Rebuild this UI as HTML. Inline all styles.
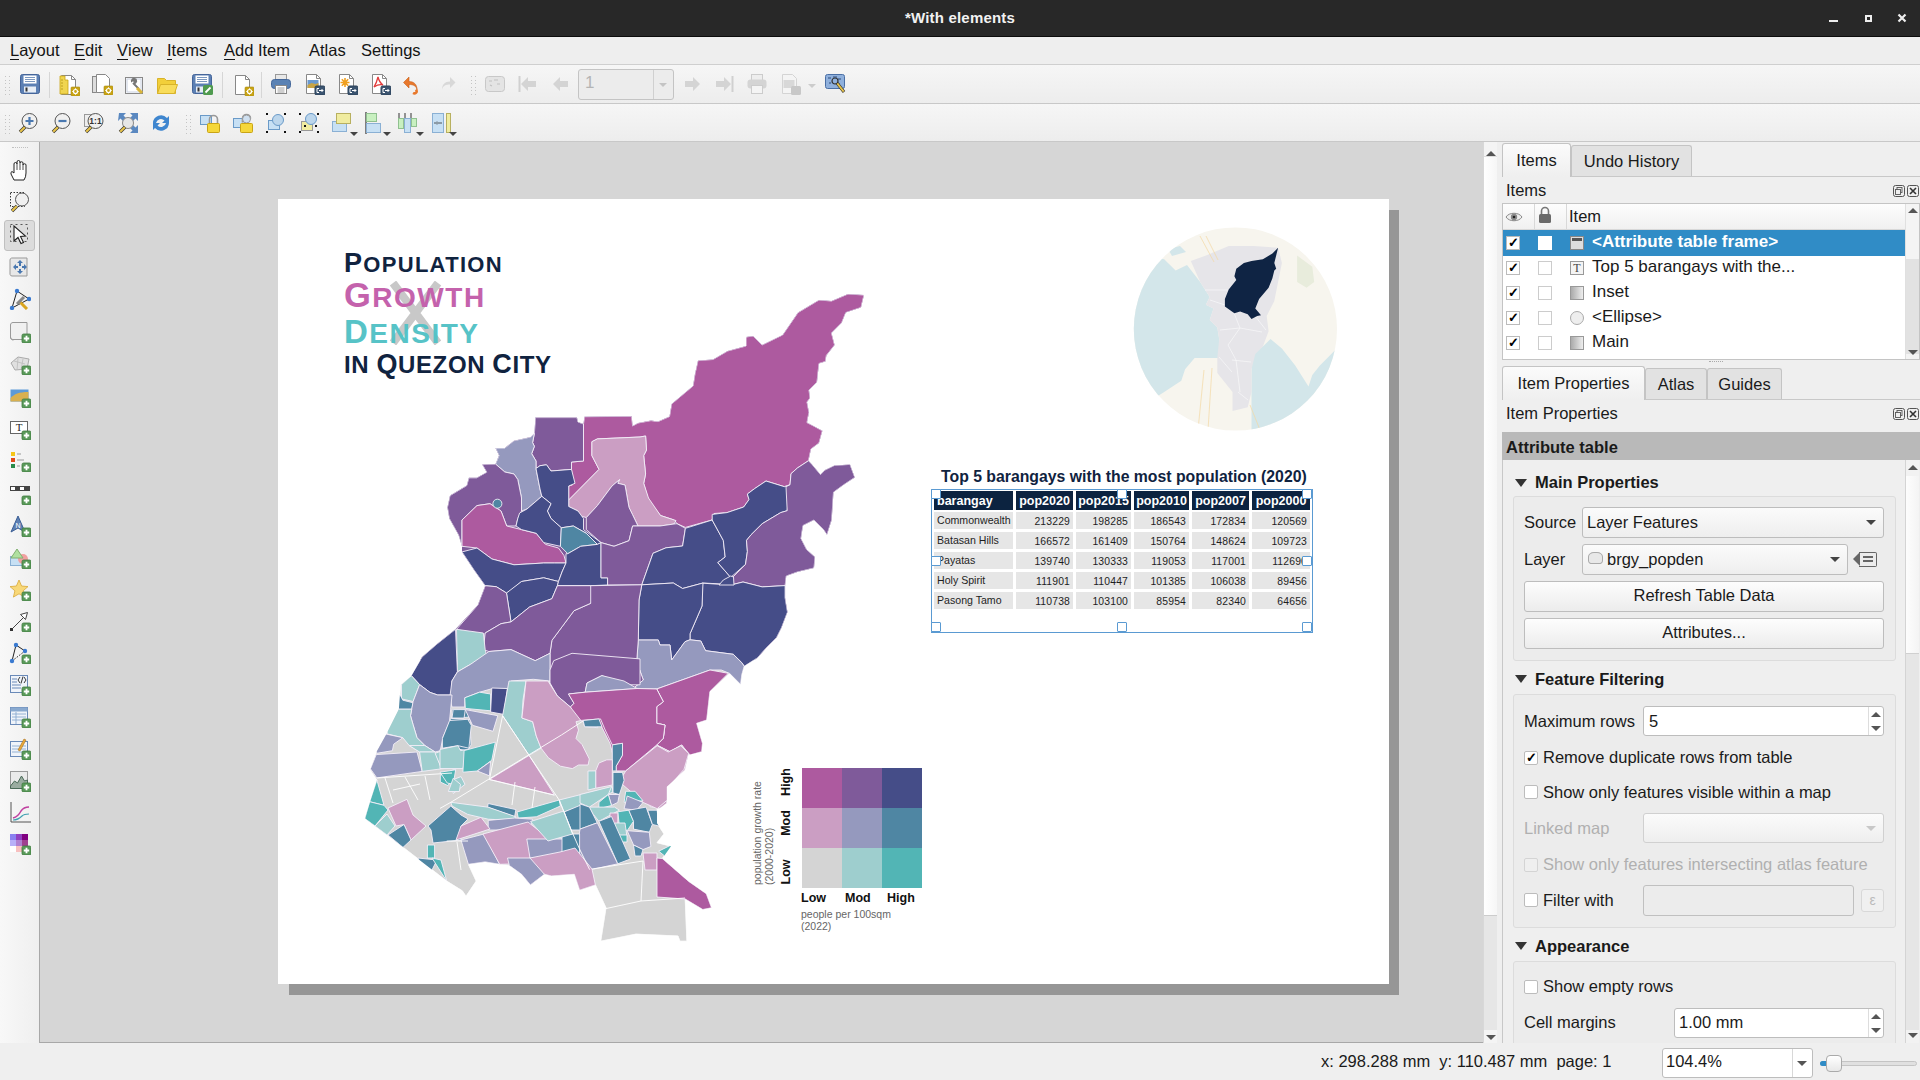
<!DOCTYPE html>
<html><head><meta charset="utf-8">
<style>
*{box-sizing:border-box;margin:0;padding:0}
html,body{width:1920px;height:1080px;overflow:hidden;background:#efefef;font-family:"Liberation Sans",sans-serif;color:#1a1a1a}
.a{position:absolute}
#title{left:0;top:0;width:1920px;height:37px;background:#282828;border-bottom:1px solid #0c0c0c}
#title .t{left:0;width:1920px;top:9px;text-align:center;color:#f2f2f2;font-weight:bold;font-size:15px;letter-spacing:0.2px}
#menu{left:0;top:37px;width:1920px;height:28px;background:#eeeeee;border-bottom:1px solid #cfcfcf}
.mi{top:4px;font-size:16.5px;color:#141414}
.mi u{text-decoration:none;border-bottom:1px solid #141414;display:inline-block;line-height:17px}
#tb1{left:0;top:65px;width:1920px;height:39px;background:linear-gradient(#f6f6f6,#ededed);border-bottom:1px solid #c8c8c8}
#tb2{left:0;top:104px;width:1920px;height:38px;background:linear-gradient(#f6f6f6,#ededed);border-bottom:1px solid #c8c8c8}
#ltb{left:0;top:142px;width:39px;height:901px;background:linear-gradient(90deg,#f8f8f8,#efefef)}
#canvas{left:39px;top:142px;width:1444px;height:901px;background:#d6d6d6;border-left:1px solid #a8a8a8;border-bottom:1px solid #a8a8a8}
#vscroll{left:1483px;top:142px;width:14px;height:901px;background:#f4f4f4;border-left:1px solid #d8d8d8}
#status{left:0;top:1043px;width:1920px;height:37px;background:#efefef}
.st{font-size:16.5px;color:#1a1a1a}
.panel-t{font-size:16.5px;color:#1a1a1a}
.tab{border:1px solid #c4c4c4;border-bottom:none;border-radius:3px 3px 0 0;background:#e2e2e2;font-size:16.5px;text-align:center}
.tab.on{background:linear-gradient(#fbfbfb,#efefef)}
.combo{background:linear-gradient(#fbfbfb,#eeeeee);border:1px solid #bdbdbd;border-radius:3px}
.btn{background:linear-gradient(#fdfdfd,#ececec);border:1px solid #bdbdbd;border-radius:3px;text-align:center;font-size:16.5px}
.inp{background:#fff;border:1px solid #bdbdbd;border-radius:3px}
.chk{width:14px;height:14px;background:#fff;border:1px solid #bcbcbc;border-radius:2px}
.grp{border:1px solid #dcdcdc;border-radius:3px;background:#ececec}
.gh{font-size:16.5px;font-weight:bold;padding-top:2px}
.tri{width:0;height:0;border-left:6px solid transparent;border-right:6px solid transparent;border-top:8px solid #333}
.lbl{font-size:16.5px;padding-top:2px}
</style></head><body>
<div id="title" class="a"><div class="t a">*With elements</div>
 <div class="a" style="left:1829px;top:20px;width:9px;height:2px;background:#eee"></div>
 <div class="a" style="left:1865px;top:15px;width:6.5px;height:6.5px;border:2.2px solid #eee"></div>
 <svg class="a" style="left:1897px;top:13px" width="10" height="10" viewBox="0 0 10 10"><path d="M1.5 1.5L8.5 8.5M8.5 1.5L1.5 8.5" stroke="#eee" stroke-width="2.2"/></svg>
</div>
<div id="menu" class="a">
 <div class="mi a" style="left:10px"><u>L</u>ayout</div>
 <div class="mi a" style="left:74px"><u>E</u>dit</div>
 <div class="mi a" style="left:117px"><u>V</u>iew</div>
 <div class="mi a" style="left:167px"><u>I</u>tems</div>
 <div class="mi a" style="left:224px"><u>A</u>dd Item</div>
 <div class="mi a" style="left:309px">Atlas</div>
 <div class="mi a" style="left:361px">Settings</div>
</div>
<div id="tb1" class="a"></div>
<div id="tb2" class="a"></div>
<div id="ltb" class="a"></div>
<!--ICONS-->
<div class="a" style="left:5px;top:76.0px;width:1px;height:1px;background:#c4c4c4"></div><div class="a" style="left:8.5px;top:76.0px;width:1px;height:1px;background:#c4c4c4"></div><div class="a" style="left:5px;top:79.5px;width:1px;height:1px;background:#c4c4c4"></div><div class="a" style="left:8.5px;top:79.5px;width:1px;height:1px;background:#c4c4c4"></div><div class="a" style="left:5px;top:83.0px;width:1px;height:1px;background:#c4c4c4"></div><div class="a" style="left:8.5px;top:83.0px;width:1px;height:1px;background:#c4c4c4"></div><div class="a" style="left:5px;top:86.5px;width:1px;height:1px;background:#c4c4c4"></div><div class="a" style="left:8.5px;top:86.5px;width:1px;height:1px;background:#c4c4c4"></div><div class="a" style="left:5px;top:90.0px;width:1px;height:1px;background:#c4c4c4"></div><div class="a" style="left:8.5px;top:90.0px;width:1px;height:1px;background:#c4c4c4"></div><div class="a" style="left:5px;top:93.5px;width:1px;height:1px;background:#c4c4c4"></div><div class="a" style="left:8.5px;top:93.5px;width:1px;height:1px;background:#c4c4c4"></div>
<svg class="a" style="left:19px;top:73px" width="22" height="22" viewBox="0 0 22 22"><rect x="1.5" y="1.5" width="19" height="19" rx="2" fill="#5c80b4" stroke="#45659a"/><rect x="4.5" y="2.5" width="13" height="8" fill="#fff"/><path d="M6 4.5h10M6 6.5h10M6 8.5h10" stroke="#6d8cb8" stroke-width="0.9"/><rect x="5" y="13.5" width="12" height="6" fill="#e8eef6"/><rect x="6.5" y="14.5" width="2" height="4" fill="#333"/></svg>
<svg class="a" style="left:58px;top:74px" width="22" height="22" viewBox="0 0 22 22"><path d="M3.5 1.5h10l4 4v15h-14z" fill="#fff" stroke="#888" stroke-width="1"/><path d="M13.5 1.5v4h4" fill="none" stroke="#888" stroke-width="1"/><path d="M2 2h5v4h3v14H2z" fill="#f0d550" stroke="#c9a415" stroke-width="0.8"/><path d="M3 6h2M3 9h2M3 12h2M3 15h2" stroke="#a88a10" stroke-width="0.7"/><rect x="13" y="13" width="9" height="9" rx="1" fill="#c9a415" stroke="#a88a10" stroke-width="0.6"/><circle cx="17.5" cy="17.5" r="2" fill="none" stroke="#fff" stroke-width="1.2"/><path d="M17.5 14.3v1.2M17.5 19.5v1.2M14.3 17.5h1.2M19.5 17.5h1.2" stroke="#fff" stroke-width="1"/></svg>
<svg class="a" style="left:91px;top:73px" width="22" height="22" viewBox="0 0 22 22"><rect x="1.5" y="3.5" width="14" height="16" fill="#ddd" stroke="#888"/><path d="M5.5 1.5h9l4 4v14h-13z" fill="#fff" stroke="#888"/><rect x="13" y="13" width="9" height="9" rx="1" fill="#c9a415" stroke="#a88a10" stroke-width="0.6"/><circle cx="17.5" cy="17.5" r="2" fill="none" stroke="#fff" stroke-width="1.2"/><path d="M17.5 14.3v1.2M17.5 19.5v1.2M14.3 17.5h1.2M19.5 17.5h1.2" stroke="#fff" stroke-width="1"/></svg>
<svg class="a" style="left:124px;top:74px" width="22" height="22" viewBox="0 0 22 22"><rect x="1.5" y="3.5" width="17" height="16" fill="#fff" stroke="#888"/><rect x="3" y="5" width="14" height="13" fill="none" stroke="#c8d0e0"/><path d="M8 8c-1-2 1-4 3-3l-1.5 1.5 1 1 1.5-1.5c1 2-1 4-3 3l6 6" stroke="#777" stroke-width="1.8" fill="none"/><path d="M13 14l5 5" stroke="#d9b53a" stroke-width="3"/></svg>
<svg class="a" style="left:156px;top:74px" width="22" height="22" viewBox="0 0 22 22"><path d="M1.5 4.5h7l2 2h9v13h-18z" fill="#f2cf3a" stroke="#d8b32a"/><path d="M1.5 19.5l3-9h17l-3 9z" fill="#f8dc5a" stroke="#d8b32a"/></svg>
<svg class="a" style="left:191px;top:73px" width="22" height="22" viewBox="0 0 22 22"><rect x="1.5" y="1.5" width="19" height="19" rx="2" fill="#5c80b4" stroke="#45659a"/><rect x="4.5" y="2.5" width="13" height="8" fill="#fff"/><path d="M6 4.5h10M6 6.5h10M6 8.5h10" stroke="#6d8cb8" stroke-width="0.9"/><rect x="5" y="13.5" width="12" height="6" fill="#e8eef6"/><rect x="6.5" y="14.5" width="2" height="4" fill="#333"/><rect x="12" y="12" width="10" height="10" rx="1.5" fill="#4f9a4f"/><path d="M14.5 19.5l5-5" stroke="#fff" stroke-width="1.8"/></svg>
<svg class="a" style="left:232px;top:74px" width="22" height="22" viewBox="0 0 22 22"><path d="M3.5 1.5h10l4 4v15h-14z" fill="#fff" stroke="#888" stroke-width="1"/><path d="M13.5 1.5v4h4" fill="none" stroke="#888" stroke-width="1"/><rect x="13" y="13" width="9" height="9" rx="1" fill="#c9a415" stroke="#a88a10" stroke-width="0.6"/><circle cx="17.5" cy="17.5" r="2" fill="none" stroke="#fff" stroke-width="1.2"/><path d="M17.5 14.3v1.2M17.5 19.5v1.2M14.3 17.5h1.2M19.5 17.5h1.2" stroke="#fff" stroke-width="1"/></svg>
<svg class="a" style="left:270px;top:73px" width="22" height="22" viewBox="0 0 22 22"><rect x="5.5" y="1.5" width="11" height="6" fill="#e8e8e8" stroke="#999"/><rect x="1.5" y="6.5" width="19" height="9" rx="3" fill="#5a82b4" stroke="#44679a"/><rect x="5.5" y="12.5" width="11" height="8" fill="#fff" stroke="#888"/><path d="M7.5 15h7M7.5 17h7M7.5 19h7" stroke="#888" stroke-width="0.8"/></svg>
<svg class="a" style="left:303px;top:73px" width="22" height="22" viewBox="0 0 22 22"><path d="M3.5 1.5h10l4 4v15h-14z" fill="#fff" stroke="#888" stroke-width="1"/><path d="M13.5 1.5v4h4" fill="none" stroke="#888" stroke-width="1"/><rect x="4.5" y="7" width="11" height="8" fill="#6a9ad0"/><path d="M4.5 12l4-2 4 1 3-1v5h-11z" fill="#c8a445"/><rect x="12" y="13" width="10" height="9" rx="1.5" fill="#3b5470" stroke="#2b4058"/><path d="M14 15.5v4M14 15.5h2M14 19.5h2M16 17.5h4M18.5 16l1.5 1.5-1.5 1.5" stroke="#fff" stroke-width="1" fill="none"/></svg>
<svg class="a" style="left:336px;top:73px" width="22" height="22" viewBox="0 0 22 22"><path d="M3.5 1.5h10l4 4v15h-14z" fill="#fff" stroke="#888" stroke-width="1"/><path d="M13.5 1.5v4h4" fill="none" stroke="#888" stroke-width="1"/><path d="M9 5v9M4.5 9.5h9M5.8 6.3l6.4 6.4M12.2 6.3l-6.4 6.4" stroke="#f0a020" stroke-width="1.6"/><rect x="12" y="13" width="10" height="9" rx="1.5" fill="#3b5470" stroke="#2b4058"/><path d="M14 15.5v4M14 15.5h2M14 19.5h2M16 17.5h4M18.5 16l1.5 1.5-1.5 1.5" stroke="#fff" stroke-width="1" fill="none"/></svg>
<svg class="a" style="left:369px;top:73px" width="22" height="22" viewBox="0 0 22 22"><path d="M3.5 1.5h10l4 4v15h-14z" fill="#fff" stroke="#888" stroke-width="1"/><path d="M13.5 1.5v4h4" fill="none" stroke="#888" stroke-width="1"/><path d="M5 14c2-3 3-6 4-10 1 4 2 6 5 8-3-1-6 0-9 2z" fill="none" stroke="#e23b3b" stroke-width="1.3"/><rect x="12" y="13" width="10" height="9" rx="1.5" fill="#3b5470" stroke="#2b4058"/><path d="M14 15.5v4M14 15.5h2M14 19.5h2M16 17.5h4M18.5 16l1.5 1.5-1.5 1.5" stroke="#fff" stroke-width="1" fill="none"/></svg>
<svg class="a" style="left:402px;top:73px" width="22" height="22" viewBox="0 0 22 22"><path d="M7 4L1.5 9.5 7 15v-3.5c4 0 7 1 8 5 0-5-3-8-8-8z" fill="#e8782c" stroke="#c95f18" stroke-width="0.6"/><path d="M14 16.5c2 3 -1 4.5-3 3.5" stroke="#e8782c" stroke-width="2.5" fill="none"/></svg>
<svg class="a" style="left:435px;top:73px" width="22" height="22" viewBox="0 0 22 22"><path d="M15 4l5.5 5.5L15 15v-3.5c-4 0-7 1-8 5 0-5 3-8 8-8z" fill="#d8d8d8"/></svg>
<svg class="a" style="left:484px;top:73px" width="22" height="22" viewBox="0 0 22 22"><rect x="1.5" y="3.5" width="19" height="15" rx="3" fill="#e4e4e4" stroke="#c8c8c8"/><path d="M5 8h3M10 7h4M6 12l2 1M13 11h3" stroke="#c0c0c0" stroke-width="1.2"/></svg>
<svg class="a" style="left:517px;top:73px" width="22" height="22" viewBox="0 0 22 22"><path d="M2.5 3v16" stroke="#d0d0d0" stroke-width="2"/><path d="M4 11l7-7v4h8v6h-8v4z" fill="#d4d4d4"/></svg>
<svg class="a" style="left:551px;top:73px" width="22" height="22" viewBox="0 0 22 22"><path d="M2 11l7-7v4h8v6h-8v4z" fill="#d4d4d4"/></svg>
<svg class="a" style="left:680px;top:73px" width="22" height="22" viewBox="0 0 22 22"><path d="M20 11l-7-7v4H5v6h8v4z" fill="#d4d4d4"/></svg>
<svg class="a" style="left:713px;top:73px" width="22" height="22" viewBox="0 0 22 22"><path d="M19.5 3v16" stroke="#d0d0d0" stroke-width="2"/><path d="M18 11l-7-7v4H3v6h8v4z" fill="#d4d4d4"/></svg>
<svg class="a" style="left:746px;top:73px" width="22" height="22" viewBox="0 0 22 22"><rect x="5.5" y="1.5" width="11" height="6" fill="#eee" stroke="#ccc"/><rect x="1.5" y="6.5" width="19" height="9" rx="3" fill="#d4d4d4"/><rect x="5.5" y="12.5" width="11" height="8" fill="#f4f4f4" stroke="#ccc"/></svg>
<svg class="a" style="left:779px;top:73px" width="22" height="22" viewBox="0 0 22 22"><path d="M3.5 1.5h10l4 4v15h-14z" fill="#f4f4f4" stroke="#d4d4d4"/><rect x="4.5" y="7" width="11" height="8" fill="#d8d8d8"/><rect x="12" y="13" width="10" height="9" rx="1.5" fill="#c8c8c8"/></svg>
<svg class="a" style="left:824px;top:73px" width="22" height="22" viewBox="0 0 22 22"><rect x="1.5" y="1.5" width="19" height="14" rx="2" fill="#8fb0dc" stroke="#4a6fa5"/><path d="M4 5h3M9 4h4M14 6h3M5 10h2M12 11h4" stroke="#2c4a7a" stroke-width="1"/><circle cx="11" cy="8" r="3" fill="none" stroke="#333" stroke-width="1.2"/><path d="M13 10l7 9" stroke="#333" stroke-width="3"/><path d="M13.3 10.4l6.4 8.2" stroke="#e8c44a" stroke-width="1.8"/></svg>
<div class="a" style="left:49px;top:72px;width:1px;height:26px;background:#d6d6d6"></div>
<div class="a" style="left:222px;top:72px;width:1px;height:26px;background:#d6d6d6"></div>
<div class="a" style="left:261px;top:72px;width:1px;height:26px;background:#d6d6d6"></div>
<div class="a" style="left:471px;top:76.0px;width:1px;height:1px;background:#c4c4c4"></div><div class="a" style="left:474.5px;top:76.0px;width:1px;height:1px;background:#c4c4c4"></div><div class="a" style="left:471px;top:79.5px;width:1px;height:1px;background:#c4c4c4"></div><div class="a" style="left:474.5px;top:79.5px;width:1px;height:1px;background:#c4c4c4"></div><div class="a" style="left:471px;top:83.0px;width:1px;height:1px;background:#c4c4c4"></div><div class="a" style="left:474.5px;top:83.0px;width:1px;height:1px;background:#c4c4c4"></div><div class="a" style="left:471px;top:86.5px;width:1px;height:1px;background:#c4c4c4"></div><div class="a" style="left:474.5px;top:86.5px;width:1px;height:1px;background:#c4c4c4"></div><div class="a" style="left:471px;top:90.0px;width:1px;height:1px;background:#c4c4c4"></div><div class="a" style="left:474.5px;top:90.0px;width:1px;height:1px;background:#c4c4c4"></div><div class="a" style="left:471px;top:93.5px;width:1px;height:1px;background:#c4c4c4"></div><div class="a" style="left:474.5px;top:93.5px;width:1px;height:1px;background:#c4c4c4"></div>
<div class="a" style="left:578px;top:69px;width:96px;height:31px;background:#ececec;border:1px solid #c4c4c4;border-radius:3px"></div><div class="a" style="left:653px;top:70px;width:1px;height:29px;background:#d0d0d0"></div><div class="a" style="left:585px;top:73px;font-size:17px;color:#b4b4b4">1</div>
<div class="a" style="left:659px;top:83px;width:0;height:0;border-left:4px solid transparent;border-right:4px solid transparent;border-top:4px solid #c4c4c4"></div>
<div class="a" style="left:808px;top:84px;width:0;height:0;border-left:4px solid transparent;border-right:4px solid transparent;border-top:4px solid #cccccc"></div>
<div class="a" style="left:5px;top:115.0px;width:1px;height:1px;background:#c4c4c4"></div><div class="a" style="left:8.5px;top:115.0px;width:1px;height:1px;background:#c4c4c4"></div><div class="a" style="left:5px;top:118.5px;width:1px;height:1px;background:#c4c4c4"></div><div class="a" style="left:8.5px;top:118.5px;width:1px;height:1px;background:#c4c4c4"></div><div class="a" style="left:5px;top:122.0px;width:1px;height:1px;background:#c4c4c4"></div><div class="a" style="left:8.5px;top:122.0px;width:1px;height:1px;background:#c4c4c4"></div><div class="a" style="left:5px;top:125.5px;width:1px;height:1px;background:#c4c4c4"></div><div class="a" style="left:8.5px;top:125.5px;width:1px;height:1px;background:#c4c4c4"></div><div class="a" style="left:5px;top:129.0px;width:1px;height:1px;background:#c4c4c4"></div><div class="a" style="left:8.5px;top:129.0px;width:1px;height:1px;background:#c4c4c4"></div><div class="a" style="left:5px;top:132.5px;width:1px;height:1px;background:#c4c4c4"></div><div class="a" style="left:8.5px;top:132.5px;width:1px;height:1px;background:#c4c4c4"></div>
<svg class="a" style="left:17px;top:112px" width="22" height="22" viewBox="0 0 22 22"><circle cx="12.5" cy="9" r="7.5" fill="#f0f0f0" stroke="#555" stroke-width="1"/><path d="M12.5 5v8M8.5 9h8" stroke="#4a78b0" stroke-width="2.2"/><path d="M3 20l5-5" stroke="#333" stroke-width="3.4"/><path d="M3.2 19.8l4.6-4.6" stroke="#e8c44a" stroke-width="2.2"/></svg>
<svg class="a" style="left:50px;top:112px" width="22" height="22" viewBox="0 0 22 22"><circle cx="12.5" cy="9" r="7.5" fill="#f0f0f0" stroke="#555" stroke-width="1"/><path d="M8.5 9h8" stroke="#4a78b0" stroke-width="2.2"/><path d="M3 20l5-5" stroke="#333" stroke-width="3.4"/><path d="M3.2 19.8l4.6-4.6" stroke="#e8c44a" stroke-width="2.2"/></svg>
<svg class="a" style="left:83px;top:112px" width="22" height="22" viewBox="0 0 22 22"><rect x="1.5" y="2.5" width="10" height="12" fill="#eee" stroke="#999"/><circle cx="12.5" cy="9" r="7.5" fill="#f0f0f0" stroke="#555" stroke-width="1"/><text x="12.5" y="12" font-size="8.5" font-weight="bold" text-anchor="middle" font-family="Liberation Sans" fill="#333">1:1</text><path d="M3 20l5-5" stroke="#333" stroke-width="3.4"/><path d="M3.2 19.8l4.6-4.6" stroke="#e8c44a" stroke-width="2.2"/></svg>
<svg class="a" style="left:117px;top:112px" width="22" height="22" viewBox="0 0 22 22"><path d="M2 1h7l-2.5 2.5 3 3-3 3-3-3L1 9z M21 1v8l-2.5-2.5-3 3-3-3 3-3L13 1z M21 21h-8l2.5-2.5-3-3 3-3 3 3L21 13z" fill="#5a88c0"/><circle cx="11" cy="11" r="5.5" fill="#e6e6e6" stroke="#888"/><path d="M3 20l5-5" stroke="#333" stroke-width="3.4"/><path d="M3.2 19.8l4.6-4.6" stroke="#e8c44a" stroke-width="2.2"/></svg>
<svg class="a" style="left:150px;top:112px" width="22" height="22" viewBox="0 0 22 22"><path d="M3 11a8 8 0 0 1 14-5l2-2v7h-7l2.5-2.5A5 5 0 0 0 6 11z" fill="#3f86cf"/><path d="M19 11a8 8 0 0 1-14 5l-2 2v-7h7l-2.5 2.5A5 5 0 0 0 16 11z" fill="#3f86cf"/></svg>
<svg class="a" style="left:199px;top:112px" width="22" height="22" viewBox="0 0 22 22"><rect x="1.5" y="3.5" width="11" height="9" fill="#c7e0f4" stroke="#6a9ac8"/><path d="M10.5 11.5v-4a4 4 0 0 1 8 0v4" fill="none" stroke="#999" stroke-width="1.6"/><rect x="8.5" y="11.5" width="12" height="9" rx="1" fill="#f5d73a" stroke="#c9a415"/></svg>
<svg class="a" style="left:232px;top:112px" width="22" height="22" viewBox="0 0 22 22"><rect x="1.5" y="6.5" width="11" height="9" fill="#c7e0f4" stroke="#6a9ac8"/><path d="M10.5 10.5v-4a4 4 0 0 1 8 0" fill="none" stroke="#999" stroke-width="1.6"/><circle cx="14.5" cy="7" r="4" fill="#cfe0f0" stroke="#999"/><rect x="8.5" y="11.5" width="12" height="9" rx="1" fill="#f5d73a" stroke="#c9a415"/></svg>
<svg class="a" style="left:265px;top:112px" width="22" height="22" viewBox="0 0 22 22"><rect x="3.5" y="8.5" width="11" height="9" fill="#c7e0f4" stroke="#6a9ac8"/><circle cx="13" cy="8" r="5.5" fill="#bcd6ec" stroke="#6a9ac8"/><rect x="1" y="1" width="2" height="2" fill="#111"/><rect x="19" y="1" width="2" height="2" fill="#111"/><rect x="1" y="19" width="2" height="2" fill="#111"/><rect x="19" y="19" width="2" height="2" fill="#111"/></svg>
<svg class="a" style="left:298px;top:112px" width="22" height="22" viewBox="0 0 22 22"><rect x="3.5" y="9.5" width="11" height="9" fill="#f0eca0" stroke="#999"/><circle cx="13" cy="7" r="5.5" fill="#bcd6ec" stroke="#6a9ac8"/><rect x="1" y="1" width="2" height="2" fill="#111"/><rect x="19" y="1" width="2" height="2" fill="#111"/><rect x="1" y="19" width="2" height="2" fill="#111"/><rect x="19" y="19" width="2" height="2" fill="#111"/><rect x="6" y="13" width="2" height="2" fill="#111"/><rect x="17" y="13" width="2" height="2" fill="#111"/></svg>
<svg class="a" style="left:331px;top:112px" width="22" height="22" viewBox="0 0 22 22"><rect x="1.5" y="9.5" width="14" height="10" fill="#c7e0f4" stroke="#8ab0d4"/><rect x="5.5" y="1.5" width="14" height="10" fill="#f0eca0" stroke="#b8b060"/></svg>
<svg class="a" style="left:364px;top:112px" width="22" height="22" viewBox="0 0 22 22"><path d="M2 0v22" stroke="#333" stroke-width="1.2"/><rect x="2.5" y="1.5" width="10" height="8" fill="#c8f0c0" stroke="#90c090"/><rect x="2.5" y="11.5" width="14" height="9" fill="#c7e0f4" stroke="#8ab0d4"/></svg>
<svg class="a" style="left:397px;top:112px" width="22" height="22" viewBox="0 0 22 22"><path d="M2 1v7M8 1v7M14 1v7" stroke="#333" stroke-width="1"/><rect x="1.5" y="6.5" width="5" height="10" fill="#c8f0c0" stroke="#90c090"/><rect x="7.5" y="6.5" width="6" height="14" fill="#c7e0f4" stroke="#8ab0d4"/><rect x="14.5" y="6.5" width="5" height="8" fill="#c8f0c0" stroke="#90c090"/></svg>
<svg class="a" style="left:431px;top:112px" width="22" height="22" viewBox="0 0 22 22"><rect x="1.5" y="1.5" width="11" height="19" fill="#c7e0f4" stroke="#8ab0d4"/><path d="M3 11h3M6 9.5l1.5 1.5L6 12.5M11 11H8" stroke="#333" stroke-width="0.8" fill="none"/><rect x="15.5" y="1.5" width="4" height="19" fill="#f0eca0" stroke="#b8b060"/></svg>
<div class="a" style="left:186px;top:115.0px;width:1px;height:1px;background:#c4c4c4"></div><div class="a" style="left:189.5px;top:115.0px;width:1px;height:1px;background:#c4c4c4"></div><div class="a" style="left:186px;top:118.5px;width:1px;height:1px;background:#c4c4c4"></div><div class="a" style="left:189.5px;top:118.5px;width:1px;height:1px;background:#c4c4c4"></div><div class="a" style="left:186px;top:122.0px;width:1px;height:1px;background:#c4c4c4"></div><div class="a" style="left:189.5px;top:122.0px;width:1px;height:1px;background:#c4c4c4"></div><div class="a" style="left:186px;top:125.5px;width:1px;height:1px;background:#c4c4c4"></div><div class="a" style="left:189.5px;top:125.5px;width:1px;height:1px;background:#c4c4c4"></div><div class="a" style="left:186px;top:129.0px;width:1px;height:1px;background:#c4c4c4"></div><div class="a" style="left:189.5px;top:129.0px;width:1px;height:1px;background:#c4c4c4"></div><div class="a" style="left:186px;top:132.5px;width:1px;height:1px;background:#c4c4c4"></div><div class="a" style="left:189.5px;top:132.5px;width:1px;height:1px;background:#c4c4c4"></div>
<div class="a" style="left:350px;top:132px;width:0;height:0;border-left:4px solid transparent;border-right:4px solid transparent;border-top:4px solid #444"></div>
<div class="a" style="left:383px;top:132px;width:0;height:0;border-left:4px solid transparent;border-right:4px solid transparent;border-top:4px solid #444"></div>
<div class="a" style="left:416px;top:132px;width:0;height:0;border-left:4px solid transparent;border-right:4px solid transparent;border-top:4px solid #444"></div>
<div class="a" style="left:449px;top:132px;width:0;height:0;border-left:4px solid transparent;border-right:4px solid transparent;border-top:4px solid #444"></div>
<div class="a" style="left:12px;top:147px;width:16px;height:2px;border-top:1.5px dotted #c0c0c0"></div>
<div class="a" style="left:4px;top:220px;width:31px;height:31px;background:#dcdcdc;border:1px solid #c0c0c0;border-radius:3px"></div>
<svg class="a" style="left:9px;top:159px" width="22" height="22" viewBox="0 0 22 22"><path d="M5 21L2 15Q1.5 13 3 12.5L5 14L5 5Q5 3.5 6.5 3.5Q8 3.5 8 5L8 3Q8 1.5 9.5 1.5Q11 1.5 11 3L11 4Q11 2.8 12.5 2.8Q14 2.8 14 4L14 6Q14 4.8 15.5 4.8Q17 4.8 17 6L17 14Q17 18 15 21Z" fill="#fff" stroke="#222" stroke-width="1"/><path d="M8 5V11M11 4V11M14 6V11" stroke="#222" stroke-width="0.8"/></svg>
<svg class="a" style="left:9px;top:191px" width="22" height="22" viewBox="0 0 22 22"><rect x="1.5" y="1.5" width="14" height="14" fill="none" stroke="#333" stroke-dasharray="1.5 1.5"/><circle cx="13" cy="8.5" r="6.5" fill="#f0f0f0" stroke="#555"/><path d="M3 20l5-5" stroke="#333" stroke-width="3.4"/><path d="M3.2 19.8l4.6-4.6" stroke="#e8c44a" stroke-width="2.2"/></svg>
<svg class="a" style="left:9px;top:223px" width="22" height="22" viewBox="0 0 22 22"><rect x="1.5" y="1.5" width="17" height="17" fill="none" stroke="#555" stroke-dasharray="2 3"/><path d="M5 3v15l4-3.5 3 6 2.5-1-3-6 5-0.5z" fill="#fff" stroke="#222" stroke-width="1.1"/></svg>
<svg class="a" style="left:9px;top:256px" width="22" height="22" viewBox="0 0 22 22"><path d="M3 2h15v18H3c-2 0-2-2-2-2V4c0-2 2-2 2-2z" fill="#e8e8e8" stroke="#999"/><path d="M11 4l-3 3h2v3h2V7h2z M11 18l-3-3h2v-2h2v2h2z M4 11l3-3v2h2v2H7v2z M18 11l-3-3v2h-2v2h2v2z" fill="#4a78b0"/></svg>
<svg class="a" style="left:9px;top:288px" width="22" height="22" viewBox="0 0 22 22"><path d="M3 20L8 3l12 8z" fill="none" stroke="#222" stroke-width="1"/><circle cx="3" cy="20" r="2.2" fill="#3a7ad0"/><circle cx="8" cy="3" r="2.2" fill="#3a7ad0"/><circle cx="20" cy="11" r="2.2" fill="#3a7ad0"/><path d="M10 13l8 8" stroke="#d9a520" stroke-width="3"/><path d="M8 16l7-7" stroke="#888" stroke-width="3"/></svg>
<svg class="a" style="left:9px;top:321px" width="22" height="22" viewBox="0 0 22 22"><path d="M4 1.5h14v17H4c-1.5 0-2.5-1-2.5-2.5V4c0-1.5 1-2.5 2.5-2.5z" fill="#f0f0f0" stroke="#999"/><path d="M1.5 16c0 2 1 3 3 3" fill="none" stroke="#999"/><rect x="13" y="13" width="9" height="9" rx="1.5" fill="#5a9a5a" stroke="#3d7a3d" stroke-width="0.8"/><path d="M17.5 14.8v5.4M14.8 17.5h5.4" stroke="#fff" stroke-width="1.8"/></svg>
<svg class="a" style="left:9px;top:353px" width="22" height="22" viewBox="0 0 22 22"><path d="M2 10l7-6 11 2-2 10-12 1z" fill="#e0e0e0" stroke="#aaa"/><path d="M5 8l11 3M9 5l-1 12M14 6l-2 11" stroke="#bbb" stroke-width="0.8"/><rect x="13" y="13" width="9" height="9" rx="1.5" fill="#5a9a5a" stroke="#3d7a3d" stroke-width="0.8"/><path d="M17.5 14.8v5.4M14.8 17.5h5.4" stroke="#fff" stroke-width="1.8"/></svg>
<svg class="a" style="left:9px;top:386px" width="22" height="22" viewBox="0 0 22 22"><rect x="1.5" y="3.5" width="18" height="12" fill="#5c9ad8"/><path d="M1.5 12c4-4 8-6 18-6v9.5h-18z" fill="#d8b050"/><rect x="13" y="13" width="9" height="9" rx="1.5" fill="#5a9a5a" stroke="#3d7a3d" stroke-width="0.8"/><path d="M17.5 14.8v5.4M14.8 17.5h5.4" stroke="#fff" stroke-width="1.8"/></svg>
<svg class="a" style="left:9px;top:418px" width="22" height="22" viewBox="0 0 22 22"><rect x="1.5" y="3.5" width="17" height="12" fill="#fff" stroke="#666"/><text x="10" y="13" font-size="11" text-anchor="middle" font-family="Liberation Serif" fill="#222">T</text><rect x="13" y="13" width="9" height="9" rx="1.5" fill="#5a9a5a" stroke="#3d7a3d" stroke-width="0.8"/><path d="M17.5 14.8v5.4M14.8 17.5h5.4" stroke="#fff" stroke-width="1.8"/></svg>
<svg class="a" style="left:9px;top:450px" width="22" height="22" viewBox="0 0 22 22"><rect x="2" y="2" width="4" height="4" fill="#f5c518"/><rect x="2" y="8" width="4" height="4" fill="#e04a1a"/><rect x="2" y="14" width="4" height="4" fill="#2a8a4a"/><path d="M8 4h4M8 10h7M8 16h3" stroke="#999" stroke-width="1.2"/><rect x="13" y="13" width="9" height="9" rx="1.5" fill="#5a9a5a" stroke="#3d7a3d" stroke-width="0.8"/><path d="M17.5 14.8v5.4M14.8 17.5h5.4" stroke="#fff" stroke-width="1.8"/></svg>
<svg class="a" style="left:9px;top:483px" width="22" height="22" viewBox="0 0 22 22"><rect x="1.5" y="3.5" width="19" height="4" fill="#fff" stroke="#444"/><rect x="6" y="3.5" width="5" height="4" fill="#444"/><rect x="15" y="3.5" width="5" height="4" fill="#444"/><rect x="13" y="13" width="9" height="9" rx="1.5" fill="#5a9a5a" stroke="#3d7a3d" stroke-width="0.8"/><path d="M17.5 14.8v5.4M14.8 17.5h5.4" stroke="#fff" stroke-width="1.8"/></svg>
<svg class="a" style="left:9px;top:515px" width="22" height="22" viewBox="0 0 22 22"><path d="M9 1L2 17l7-4 7 4z" fill="#5c80b4" stroke="#3d5f95"/><text x="9" y="13" font-size="7" text-anchor="middle" font-family="Liberation Sans" fill="#fff">N</text><rect x="13" y="13" width="9" height="9" rx="1.5" fill="#5a9a5a" stroke="#3d7a3d" stroke-width="0.8"/><path d="M17.5 14.8v5.4M14.8 17.5h5.4" stroke="#fff" stroke-width="1.8"/></svg>
<svg class="a" style="left:9px;top:547px" width="22" height="22" viewBox="0 0 22 22"><rect x="1.5" y="9.5" width="13" height="9" fill="#c7e0f4" stroke="#8ab0d4"/><circle cx="14" cy="12" r="5" fill="#f0a0a0"/><path d="M8 2l6 9H2z" fill="#b0e0a0" stroke="#80b070"/><rect x="13" y="13" width="9" height="9" rx="1.5" fill="#5a9a5a" stroke="#3d7a3d" stroke-width="0.8"/><path d="M17.5 14.8v5.4M14.8 17.5h5.4" stroke="#fff" stroke-width="1.8"/></svg>
<svg class="a" style="left:9px;top:579px" width="22" height="22" viewBox="0 0 22 22"><path d="M10 1l2.6 6 6.4.6-4.9 4.2 1.5 6.3L10 14.8l-5.6 3.3 1.5-6.3L1 7.6l6.4-.6z" fill="#f8d878" stroke="#d8a838" stroke-width="0.8"/><rect x="13" y="13" width="9" height="9" rx="1.5" fill="#5a9a5a" stroke="#3d7a3d" stroke-width="0.8"/><path d="M17.5 14.8v5.4M14.8 17.5h5.4" stroke="#fff" stroke-width="1.8"/></svg>
<svg class="a" style="left:9px;top:610px" width="22" height="22" viewBox="0 0 22 22"><path d="M2.5 19.5l15-15" stroke="#444" stroke-width="1"/><path d="M18.5 2.5l-7 2 5 5z" fill="#fff" stroke="#444"/><rect x="1" y="18" width="3" height="3" fill="#333"/><rect x="13" y="13" width="9" height="9" rx="1.5" fill="#5a9a5a" stroke="#3d7a3d" stroke-width="0.8"/><path d="M17.5 14.8v5.4M14.8 17.5h5.4" stroke="#fff" stroke-width="1.8"/></svg>
<svg class="a" style="left:9px;top:642px" width="22" height="22" viewBox="0 0 22 22"><path d="M3 19L7 3l9 6" fill="none" stroke="#222" stroke-width="1"/><path d="M3 19l13-10" stroke="#222" stroke-dasharray="1.5 1.5"/><circle cx="3" cy="19" r="2.2" fill="#3a7ad0"/><circle cx="7" cy="3" r="2.2" fill="#3a7ad0"/><circle cx="16" cy="9" r="2.2" fill="#3a7ad0"/><rect x="13" y="13" width="9" height="9" rx="1.5" fill="#5a9a5a" stroke="#3d7a3d" stroke-width="0.8"/><path d="M17.5 14.8v5.4M14.8 17.5h5.4" stroke="#fff" stroke-width="1.8"/></svg>
<svg class="a" style="left:9px;top:674px" width="22" height="22" viewBox="0 0 22 22"><rect x="1.5" y="1.5" width="17" height="17" fill="#f0f4fa" stroke="#6a8ab8"/><path d="M3 5h5M3 8h5M3 11h9M3 14h9" stroke="#6a8ab8" stroke-width="1.2"/><path d="M11 3l-2 3 2 3M15 3l2 3-2 3M14 2.5l-2 7" stroke="#222" stroke-width="0.9" fill="none"/><rect x="13" y="13" width="9" height="9" rx="1.5" fill="#5a9a5a" stroke="#3d7a3d" stroke-width="0.8"/><path d="M17.5 14.8v5.4M14.8 17.5h5.4" stroke="#fff" stroke-width="1.8"/></svg>
<svg class="a" style="left:9px;top:706px" width="22" height="22" viewBox="0 0 22 22"><rect x="1.5" y="1.5" width="17" height="17" fill="#f0f4fa" stroke="#6a8ab8"/><rect x="1.5" y="1.5" width="17" height="4" fill="#8aaad0"/><path d="M3 8h14M3 11h14M3 14h14M7 6v12" stroke="#8aaad0" stroke-width="0.9"/><rect x="13" y="13" width="9" height="9" rx="1.5" fill="#5a9a5a" stroke="#3d7a3d" stroke-width="0.8"/><path d="M17.5 14.8v5.4M14.8 17.5h5.4" stroke="#fff" stroke-width="1.8"/></svg>
<svg class="a" style="left:9px;top:738px" width="22" height="22" viewBox="0 0 22 22"><rect x="1.5" y="3.5" width="17" height="15" fill="#f0f4fa" stroke="#6a8ab8"/><path d="M3 8h14M3 11h14M3 14h14" stroke="#8aaad0" stroke-width="0.9"/><path d="M9 12l6-11 2 1-6 11z" fill="#e8a838" stroke="#a87020" stroke-width="0.6"/><rect x="13" y="13" width="9" height="9" rx="1.5" fill="#5a9a5a" stroke="#3d7a3d" stroke-width="0.8"/><path d="M17.5 14.8v5.4M14.8 17.5h5.4" stroke="#fff" stroke-width="1.8"/></svg>
<svg class="a" style="left:9px;top:770px" width="22" height="22" viewBox="0 0 22 22"><rect x="1.5" y="1.5" width="17" height="17" fill="#eaeaea" stroke="#999"/><path d="M1.5 16l4-5 3 2 4-7 3 5 3-1v8.5h-17z" fill="#9aaca0" stroke="#4a6a58"/><rect x="13" y="13" width="9" height="9" rx="1.5" fill="#5a9a5a" stroke="#3d7a3d" stroke-width="0.8"/><path d="M17.5 14.8v5.4M14.8 17.5h5.4" stroke="#fff" stroke-width="1.8"/></svg>
<svg class="a" style="left:9px;top:801px" width="22" height="22" viewBox="0 0 22 22"><path d="M2 1v20h20" fill="none" stroke="#555" stroke-width="1"/><path d="M4 17c4-1 6-3 8-7 2-3 5-4 8-4" stroke="#c040a0" stroke-width="1.5" fill="none"/><path d="M4 19c4 0 7-2 9-4s5-2 7-2" stroke="#40a0b0" stroke-width="1.2" fill="none"/></svg>
<svg class="a" style="left:9px;top:833px" width="22" height="22" viewBox="0 0 22 22"><rect x="1" y="1" width="6" height="6" fill="#8a80f0"/><rect x="7" y="1" width="6" height="6" fill="#9040c0"/><rect x="13" y="1" width="6" height="6" fill="#800080"/><rect x="1" y="7" width="6" height="6" fill="#b8b0f8"/><rect x="7" y="7" width="6" height="6" fill="#b080d0"/><rect x="13" y="7" width="6" height="6" fill="#a04090"/><rect x="1" y="13" width="6" height="6" fill="#fff"/><rect x="7" y="13" width="6" height="6" fill="#f8c0c0"/><rect x="13" y="13" width="9" height="9" rx="1.5" fill="#5a9a5a" stroke="#3d7a3d" stroke-width="0.8"/><path d="M17.5 14.8v5.4M14.8 17.5h5.4" stroke="#fff" stroke-width="1.8"/></svg>
<!--/ICONS-->
<div id="canvas" class="a">
 <!-- paper -->
 <div class="a" style="left:249px;top:68px;width:1110px;height:785px;background:#969696"></div>
 <div class="a" style="left:238px;top:57px;width:1111px;height:785px;background:#fff"></div>
</div>
<!--MAP-->
<svg class="a" style="left:0;top:0" width="1920" height="1080" viewBox="0 0 1920 1080">
<defs><clipPath id="cc"><polygon points="864.0,295.0 861.0,307.5 845.8,312.6 841.7,322.8 831.5,333.0 834.6,345.0 826.4,355.4 825.4,361.5 819.0,363.5 817.0,382.0 809.0,390.0 810.0,398.0 807.0,402.0 809.0,412.4 807.0,422.6 813.0,425.7 822.4,430.8 819.0,443.0 811.0,449.0 808.5,460.7 812.0,464.4 820.5,474.6 825.0,470.0 834.4,465.4 850.0,464.4 854.8,477.4 843.7,484.8 833.5,492.2 831.7,520.0 827.0,534.8 823.3,529.3 814.0,520.0 803.0,525.5 801.0,538.5 806.7,549.6 815.0,557.0 814.0,568.0 797.4,572.0 786.3,576.0 785.1,585.6 785.1,597.7 787.5,612.1 781.5,627.8 776.7,637.4 767.0,647.0 757.4,657.9 744.2,666.3 741.8,674.7 740.6,684.4 729.7,673.5 709.9,691.6 706.7,720.0 696.7,723.3 702.5,743.3 701.7,751.7 688.3,755.0 685.0,770.0 666.7,786.7 666.7,803.3 660.0,808.3 657.0,809.3 657.0,823.3 664.0,833.9 657.0,842.7 671.0,846.2 662.3,858.5 688.7,881.4 706.3,893.7 711.5,907.8 702.8,909.5 685.2,899.0 686.9,941.2 679.9,941.2 678.0,936.0 636.0,934.1 600.7,941.2 606.0,907.8 595.4,884.9 579.6,890.2 574.3,874.3 551.5,876.0 544.4,874.3 530.4,884.9 521.6,874.3 509.3,865.5 499.7,864.3 485.2,861.9 468.4,864.3 476.2,881.1 466.0,896.2 462.3,890.8 446.7,881.1 403.3,847.4 364.8,818.5 376.9,780.0 370.2,770.0 376.7,751.5 386.0,734.8 398.9,708.9 400.7,684.8 411.0,676.5 422.0,657.0 437.0,644.0 455.5,629.3 477.8,605.0 485.2,585.7 474.0,570.0 462.0,551.9 462.0,546.3 458.5,535.0 449.3,518.5 447.4,507.4 450.0,495.6 466.7,485.6 468.9,477.8 476.7,477.8 486.7,472.2 482.2,464.4 495.5,464.0 499.0,455.6 495.5,448.0 504.8,448.0 514.0,440.7 530.7,437.0 534.4,433.3 535.4,417.6 577.0,417.6 578.0,422.0 583.5,424.0 584.4,416.7 631.7,416.3 632.6,426.0 638.0,423.0 651.0,420.6 658.0,421.6 669.5,416.5 671.6,404.0 693.0,386.0 695.0,373.7 698.0,360.5 713.0,359.5 727.6,351.0 746.0,346.0 746.0,337.0 753.0,336.0 762.0,345.0 782.6,335.0 798.0,312.6 819.0,300.0 831.5,301.0 848.0,294.0"/></clipPath></defs><g clip-path="url(#cc)">
<polygon points="864.0,295.0 861.0,307.5 845.8,312.6 841.7,322.8 831.5,333.0 834.6,345.0 826.4,355.4 825.4,361.5 819.0,363.5 817.0,382.0 809.0,390.0 810.0,398.0 807.0,402.0 809.0,412.4 807.0,422.6 813.0,425.7 822.4,430.8 819.0,443.0 811.0,449.0 808.5,460.7 812.0,464.4 820.5,474.6 825.0,470.0 834.4,465.4 850.0,464.4 854.8,477.4 843.7,484.8 833.5,492.2 831.7,520.0 827.0,534.8 823.3,529.3 814.0,520.0 803.0,525.5 801.0,538.5 806.7,549.6 815.0,557.0 814.0,568.0 797.4,572.0 786.3,576.0 785.1,585.6 785.1,597.7 787.5,612.1 781.5,627.8 776.7,637.4 767.0,647.0 757.4,657.9 744.2,666.3 741.8,674.7 740.6,684.4 729.7,673.5 709.9,691.6 706.7,720.0 696.7,723.3 702.5,743.3 701.7,751.7 688.3,755.0 685.0,770.0 666.7,786.7 666.7,803.3 660.0,808.3 657.0,809.3 657.0,823.3 664.0,833.9 657.0,842.7 671.0,846.2 662.3,858.5 688.7,881.4 706.3,893.7 711.5,907.8 702.8,909.5 685.2,899.0 686.9,941.2 679.9,941.2 678.0,936.0 636.0,934.1 600.7,941.2 606.0,907.8 595.4,884.9 579.6,890.2 574.3,874.3 551.5,876.0 544.4,874.3 530.4,884.9 521.6,874.3 509.3,865.5 499.7,864.3 485.2,861.9 468.4,864.3 476.2,881.1 466.0,896.2 462.3,890.8 446.7,881.1 403.3,847.4 364.8,818.5 376.9,780.0 370.2,770.0 376.7,751.5 386.0,734.8 398.9,708.9 400.7,684.8 411.0,676.5 422.0,657.0 437.0,644.0 455.5,629.3 477.8,605.0 485.2,585.7 474.0,570.0 462.0,551.9 462.0,546.3 458.5,535.0 449.3,518.5 447.4,507.4 450.0,495.6 466.7,485.6 468.9,477.8 476.7,477.8 486.7,472.2 482.2,464.4 495.5,464.0 499.0,455.6 495.5,448.0 504.8,448.0 514.0,440.7 530.7,437.0 534.4,433.3 535.4,417.6 577.0,417.6 578.0,422.0 583.5,424.0 584.4,416.7 631.7,416.3 632.6,426.0 638.0,423.0 651.0,420.6 658.0,421.6 669.5,416.5 671.6,404.0 693.0,386.0 695.0,373.7 698.0,360.5 713.0,359.5 727.6,351.0 746.0,346.0 746.0,337.0 753.0,336.0 762.0,345.0 782.6,335.0 798.0,312.6 819.0,300.0 831.5,301.0 848.0,294.0" fill="#d4d4d4" stroke="#fff" stroke-width="1"/>
<rect x="300" y="280" width="600" height="380" fill="#7f5a9a"/>
<polygon points="864.0,295.0 861.0,307.5 845.8,312.6 841.7,322.8 831.5,333.0 834.6,345.0 826.4,355.4 825.4,361.5 819.0,363.5 817.0,382.0 809.0,390.0 810.0,398.0 807.0,402.0 809.0,412.4 807.0,422.6 813.0,425.7 822.4,430.8 819.0,443.0 811.0,449.0 808.5,460.7 797.4,468.0 791.0,473.7 790.0,484.8 784.4,486.7 766.0,481.0 754.8,488.5 747.4,494.0 749.0,499.6 743.7,507.0 727.0,512.6 714.0,513.5 712.0,520.0 685.4,527.4 677.0,523.7 674.3,520.0 660.5,515.5 648.5,500.0 643.7,483.3 645.6,474.0 643.7,455.6 646.5,450.0 645.6,436.0 640.0,437.0 597.4,438.9 591.9,441.7 591.9,455.6 599.0,469.4 568.7,500.0 568.7,486.0 572.4,485.0 571.5,469.4 571.5,462.0 583.5,461.0 583.5,424.0 584.4,416.7 631.7,416.3 632.6,426.0 638.0,423.0 651.0,420.6 658.0,421.6 669.5,416.5 671.6,404.0 693.0,386.0 695.0,373.7 698.0,360.5 713.0,359.5 727.6,351.0 746.0,346.0 746.0,337.0 753.0,336.0 762.0,345.0 782.6,335.0 798.0,312.6 819.0,300.0 831.5,301.0 848.0,294.0" fill="#ad5a9f" stroke="#f4eef8" stroke-width="0.9" stroke-linejoin="round"/>
<polygon points="591.9,441.7 597.4,438.9 640.0,437.0 645.6,436.0 646.5,450.0 643.7,455.6 645.6,474.0 643.7,483.3 648.5,498.0 660.5,515.5 676.0,520.6 674.0,524.0 660.0,526.0 638.0,526.0 632.6,514.8 629.0,507.4 625.0,485.0 617.8,483.3 619.6,479.6 612.0,486.0 597.4,505.6 586.3,517.6 579.8,515.7 578.0,511.0 568.7,506.5 568.7,500.0 599.0,469.4 591.9,455.6" fill="#cb9ec3" stroke="#f4eef8" stroke-width="0.9" stroke-linejoin="round"/>
<polygon points="612.0,486.0 619.6,479.6 617.8,483.3 625.0,485.0 629.0,507.4 632.6,514.8 638.0,526.0 632.6,526.0 629.0,540.7 614.0,546.3 601.0,542.6 586.3,529.6 586.3,517.6 597.4,505.6" fill="#7f5a9a" stroke="#f4eef8" stroke-width="0.9" stroke-linejoin="round"/>
<polygon points="535.4,417.6 577.0,417.6 578.0,422.0 583.5,424.0 583.5,461.0 571.5,462.0 571.5,469.4 551.0,471.0 546.5,464.8 540.0,465.7 536.0,468.5 536.0,461.0 531.7,453.7 534.4,446.3 532.6,442.6 534.4,433.3" fill="#7f5a9a" stroke="#f4eef8" stroke-width="0.9" stroke-linejoin="round"/>
<polygon points="495.5,448.0 504.8,448.0 514.0,440.7 530.7,437.0 534.4,433.3 532.6,442.6 534.4,446.3 531.7,453.7 536.0,461.0 536.0,468.5 540.0,489.0 541.8,496.3 527.0,509.0 521.5,511.0 521.5,498.0 517.8,479.6 514.0,474.0 504.8,472.0 495.5,464.0 499.0,455.6" fill="#9599be" stroke="#f4eef8" stroke-width="0.9" stroke-linejoin="round"/>
<polygon points="450.0,495.6 466.7,485.6 468.9,477.8 476.7,477.8 486.7,472.2 482.2,464.4 495.5,464.0 504.8,472.0 514.0,474.0 517.8,479.6 521.5,498.0 521.5,511.0 517.8,518.5 516.0,526.0 506.7,526.0 501.0,511.0 490.0,503.7 477.0,505.6 462.0,520.0 462.0,546.3 458.5,535.0 449.3,518.5 447.4,507.4" fill="#7f5a9a" stroke="#f4eef8" stroke-width="0.9" stroke-linejoin="round"/>
<polygon points="462.0,520.0 477.0,505.6 490.0,503.7 501.0,511.0 506.7,526.0 521.5,529.6 536.3,533.3 545.5,544.4 558.5,548.0 564.0,555.6 566.0,563.0 554.8,563.0 543.7,563.0 514.0,564.8 491.9,559.0 477.0,548.0 462.0,546.3" fill="#ad5a9f" stroke="#f4eef8" stroke-width="0.9" stroke-linejoin="round"/>
<polygon points="536.0,468.5 540.0,465.7 546.5,464.8 551.0,471.0 571.5,469.4 575.0,483.3 568.7,486.0 568.7,506.5 578.0,511.0 583.5,518.5 583.5,529.6 601.0,542.6 597.4,544.4 586.3,533.3 573.3,526.0 561.3,527.8 551.0,518.5 547.4,511.0 551.0,503.7 541.8,496.3 540.0,489.0" fill="#454d88" stroke="#f4eef8" stroke-width="0.9" stroke-linejoin="round"/>
<polygon points="519.6,513.0 527.0,509.0 541.8,496.3 551.0,503.7 547.4,511.0 551.0,518.5 561.3,527.8 560.4,546.3 543.7,542.6 536.3,533.3 521.5,529.6 516.0,526.0 517.8,518.5" fill="#454d88" stroke="#f4eef8" stroke-width="0.9" stroke-linejoin="round"/>
<polygon points="561.3,527.8 573.3,526.0 586.3,533.3 597.4,544.4 580.7,546.3 567.8,553.7 560.4,546.3" fill="#4f86a3" stroke="#f4eef8" stroke-width="0.9" stroke-linejoin="round"/>
<polygon points="462.0,551.9 477.0,548.0 491.9,559.0 514.0,564.8 543.7,563.0 554.8,563.0 566.0,563.0 562.0,572.0 558.5,581.5 543.7,577.8 521.5,581.5 510.4,590.7 506.5,593.0 496.3,586.7 485.2,585.7 474.0,570.0" fill="#454d88" stroke="#f4eef8" stroke-width="0.9" stroke-linejoin="round"/>
<polygon points="506.5,593.0 521.5,581.5 543.7,577.8 558.5,581.5 557.4,585.7 551.9,598.7 529.6,607.0 511.0,621.9" fill="#454d88" stroke="#f4eef8" stroke-width="0.9" stroke-linejoin="round"/>
<polygon points="566.0,553.7 567.8,553.7 580.7,546.3 597.4,544.4 601.0,542.6 601.0,577.8 607.6,577.8 607.6,585.0 590.7,585.7 557.4,585.7 558.5,581.5 562.0,572.0 566.0,563.0" fill="#454d88" stroke="#f4eef8" stroke-width="0.9" stroke-linejoin="round"/>
<polygon points="601.0,542.6 614.0,546.3 629.0,540.7 632.6,526.0 660.0,526.0 674.0,524.0 677.0,523.7 685.4,528.3 682.6,546.0 666.0,547.8 653.0,553.3 641.8,584.8 607.6,585.0 607.6,577.8 601.0,577.8" fill="#7f5a9a" stroke="#f4eef8" stroke-width="0.9" stroke-linejoin="round"/>
<polygon points="685.4,528.3 712.2,520.0 723.3,540.4 725.2,557.0 717.8,562.6 730.7,577.4 723.3,581.0 721.5,584.0 703.0,583.0 682.6,588.5 673.3,583.0 641.8,584.8 653.0,553.3 666.0,547.8 682.6,546.0" fill="#454d88" stroke="#f4eef8" stroke-width="0.9" stroke-linejoin="round"/>
<polygon points="712.2,514.4 727.0,512.6 743.7,507.0 749.0,499.6 747.4,494.0 754.8,488.5 766.0,481.0 784.4,486.7 790.0,484.8 787.2,510.7 780.7,512.6 762.2,523.7 751.0,534.8 746.5,540.4 747.4,551.5 745.5,564.4 730.7,577.4 717.8,562.6 725.2,557.0 723.3,540.4 712.2,520.0" fill="#454d88" stroke="#f4eef8" stroke-width="0.9" stroke-linejoin="round"/>
<polygon points="786.0,486.7 790.0,484.8 791.0,473.7 797.4,468.0 808.5,460.7 812.0,464.4 820.5,474.6 825.0,470.0 834.4,465.4 850.0,464.4 854.8,477.4 843.7,484.8 833.5,492.2 831.7,520.0 827.0,534.8 823.3,529.3 814.0,520.0 803.0,525.5 801.0,538.5 806.7,549.6 815.0,557.0 814.0,568.0 797.4,572.0 786.3,576.0 785.1,585.6 762.2,586.9 743.0,582.0 733.3,584.4 732.6,577.4 745.5,564.4 747.4,551.5 746.5,540.4 751.0,534.8 762.2,523.7 780.7,512.6 787.2,510.7" fill="#7f5a9a" stroke="#f4eef8" stroke-width="0.9" stroke-linejoin="round"/>
<polygon points="702.6,583.2 721.3,584.4 733.3,584.4 743.0,582.0 762.2,586.9 785.1,585.6 785.1,597.7 787.5,612.1 781.5,627.8 776.7,637.4 767.0,647.0 757.4,657.9 744.2,666.3 741.8,662.7 733.3,654.3 705.6,650.7 700.8,641.0 690.0,639.8 690.0,633.8 702.0,606.0" fill="#454d88" stroke="#f4eef8" stroke-width="0.9" stroke-linejoin="round"/>
<polygon points="641.8,584.8 673.3,583.0 682.6,588.5 703.0,583.0 702.0,606.0 690.0,633.8 690.0,639.8 685.0,641.7 671.7,660.0 670.0,645.0 660.0,645.0 658.3,640.0 638.3,640.0 639.0,600.0" fill="#454d88" stroke="#f4eef8" stroke-width="0.9" stroke-linejoin="round"/>
<polygon points="638.3,640.0 658.3,640.0 660.0,645.0 670.0,645.0 671.7,660.0 685.0,641.7 690.0,639.8 700.8,641.0 705.6,650.7 733.3,654.3 741.8,662.7 744.2,666.3 741.8,674.7 740.6,684.4 729.7,673.5 721.3,670.0 710.0,670.0 656.7,689.0 633.3,688.3 643.3,680.0 636.7,661.7" fill="#9599be" stroke="#f4eef8" stroke-width="0.9" stroke-linejoin="round"/>
<polygon points="656.7,689.0 710.0,670.0 728.3,673.3 709.9,691.6 706.7,720.0 696.7,723.3 702.5,743.3 701.7,751.7 690.0,755.0 681.7,745.0 670.0,751.7 656.7,745.0 663.3,738.3 665.0,725.0 656.7,723.3 656.7,706.7 663.3,701.7" fill="#ad5a9f" stroke="#f4eef8" stroke-width="0.9" stroke-linejoin="round"/>
<polygon points="566.7,693.3 633.3,693.3 656.7,689.0 663.3,701.7 656.7,706.7 656.7,723.3 665.0,725.0 663.3,738.3 656.7,745.0 630.0,770.0 616.7,771.7 615.0,763.3 610.0,743.3 601.7,726.7 598.3,720.0 581.7,721.7 570.0,710.0 575.0,703.3" fill="#ad5a9f" stroke="#f4eef8" stroke-width="0.9" stroke-linejoin="round"/>
<polygon points="656.7,745.0 670.0,751.7 681.7,745.0 688.3,755.0 685.0,770.0 666.7,786.7 666.7,803.3 660.0,808.3 650.0,806.7 641.7,793.3 621.7,783.3 630.0,770.0" fill="#cb9ec3" stroke="#f4eef8" stroke-width="0.9" stroke-linejoin="round"/>
<polygon points="557.4,585.7 590.7,585.7 641.8,584.8 639.0,600.0 638.3,640.0 636.7,661.7 643.3,680.0 633.3,688.3 626.7,681.7 598.3,674.2 585.0,681.7 583.3,691.7 566.7,693.3 570.0,710.0 568.5,704.0 557.4,696.0 550.0,683.0 550.0,653.3 551.9,640.4 574.0,610.7 590.7,603.3" fill="#7f5a9a" stroke="#f4eef8" stroke-width="0.9" stroke-linejoin="round"/>
<polygon points="585.0,681.7 598.3,674.2 626.7,681.7 633.3,688.3 626.7,693.3 583.3,691.7" fill="#9599be" stroke="#f4eef8" stroke-width="0.9" stroke-linejoin="round"/>
<polygon points="485.2,585.7 496.3,586.7 506.5,593.0 511.0,621.9 501.0,623.7 485.2,633.0 483.3,649.6 456.5,629.3 477.8,605.0" fill="#7f5a9a" stroke="#f4eef8" stroke-width="0.9" stroke-linejoin="round"/>
<polygon points="511.0,621.9 529.6,607.0 551.9,598.7 557.4,585.7 590.7,585.7 590.7,603.3 574.0,610.7 551.9,640.4 550.0,653.3 535.2,660.7 511.0,649.6 488.9,651.5 483.3,649.6 485.2,633.0 501.0,623.7" fill="#7f5a9a" stroke="#f4eef8" stroke-width="0.9" stroke-linejoin="round"/>
<polygon points="456.5,629.3 483.3,633.0 485.2,649.6 487.0,657.0 470.4,664.4 457.4,671.9" fill="#9ecece" stroke="#f4eef8" stroke-width="0.9" stroke-linejoin="round"/>
<polygon points="455.5,629.3 457.4,671.9 451.9,681.0 452.0,695.0 437.7,695.0 430.0,692.4 419.6,684.6 411.2,675.5 422.0,657.0 437.0,644.0" fill="#454d88" stroke="#f4eef8" stroke-width="0.9" stroke-linejoin="round"/>
<polygon points="457.4,671.9 470.4,664.4 488.9,651.5 511.0,649.6 535.2,660.7 550.0,653.3 550.0,681.0 533.3,679.3 511.0,681.0 509.0,688.5 492.6,688.5 479.6,692.2 464.8,697.8 464.8,707.0 451.9,707.0 450.0,696.0 451.9,681.0" fill="#9599be" stroke="#f4eef8" stroke-width="0.9" stroke-linejoin="round"/>
<polygon points="719.0,585.0 723.3,580.0 730.7,576.0 733.5,577.0 734.0,585.0" fill="#454d88" stroke="#f4eef8" stroke-width="0.9" stroke-linejoin="round"/>
<polygon points="553.7,660.7 572.0,653.3 640.0,658.9 640.0,684.8 624.0,684.8 601.9,675.6 587.0,683.0 585.2,692.2 568.5,694.0 574.0,703.3 570.4,707.0 557.4,696.0 550.0,683.0 550.0,670.0" fill="#7f5a9a" stroke="#f4eef8" stroke-width="0.9" stroke-linejoin="round"/>
<polygon points="587.0,683.0 601.9,675.6 624.0,681.0 637.0,688.5 585.2,692.2" fill="#9599be" stroke="#f4eef8" stroke-width="0.9" stroke-linejoin="round"/>
<polygon points="568.5,694.0 585.2,692.2 637.0,688.5 656.7,689.0 663.3,701.7 656.7,706.7 656.7,723.3 665.0,725.0 663.3,738.3 656.7,745.0 625.7,770.9 616.2,770.9 616.2,766.1 622.5,755.1 622.5,743.3 612.3,744.9 605.2,730.0 600.5,718.9 580.0,720.5 574.0,714.0 570.4,707.0 574.0,703.3" fill="#ad5a9f" stroke="#f4eef8" stroke-width="0.9" stroke-linejoin="round"/>
<polygon points="411.2,675.5 419.6,684.6 413.1,701.5 401.5,698.9 401.5,684.6" fill="#9ecece" stroke="#f4eef8" stroke-width="0.9" stroke-linejoin="round"/>
<polygon points="398.9,692.4 402.8,700.2 413.1,702.8 411.8,709.2 398.2,709.2" fill="#4f86a3" stroke="#f4eef8" stroke-width="0.9" stroke-linejoin="round"/>
<polygon points="419.6,684.6 430.0,692.4 437.7,695.0 452.0,695.0 450.7,709.2 449.4,722.2 442.9,737.7 440.3,750.7 435.1,752.0 424.8,745.5 417.0,737.7 413.1,724.8 410.5,715.7 413.1,701.5" fill="#9599be" stroke="#f4eef8" stroke-width="0.9" stroke-linejoin="round"/>
<polygon points="398.2,709.2 411.8,709.2 410.5,715.7 413.1,724.8 417.0,737.7 424.8,745.5 419.6,752.0 409.2,745.5 402.8,737.7 387.2,733.9 387.2,730.0" fill="#9ecece" stroke="#f4eef8" stroke-width="0.9" stroke-linejoin="round"/>
<polygon points="385.3,733.9 402.8,737.7 393.7,744.2 392.4,750.7 376.8,753.3 376.2,750.7" fill="#9599be" stroke="#f4eef8" stroke-width="0.9" stroke-linejoin="round"/>
<polygon points="409.2,745.5 424.8,745.5 435.1,752.0 419.6,752.0" fill="#9ecece" stroke="#f4eef8" stroke-width="0.9" stroke-linejoin="round"/>
<polygon points="370.4,768.8 376.2,754.6 417.0,752.0 422.2,771.4 376.8,777.9" fill="#9599be" stroke="#f4eef8" stroke-width="0.9" stroke-linejoin="round"/>
<polygon points="419.6,752.0 435.1,752.0 441.6,768.8 422.2,771.4" fill="#9ecece" stroke="#f4eef8" stroke-width="0.9" stroke-linejoin="round"/>
<polygon points="435.1,753.3 453.3,746.8 467.5,750.7 470.0,766.2 441.6,768.8" fill="#9ecece" stroke="#f4eef8" stroke-width="0.9" stroke-linejoin="round"/>
<polygon points="449.4,722.2 450.7,718.3 470.0,719.6 471.0,745.0 467.5,750.7 459.8,749.4 453.3,746.8 442.9,737.7" fill="#4f86a3" stroke="#f4eef8" stroke-width="0.9" stroke-linejoin="round"/>
<polygon points="452.0,709.2 470.0,709.2 470.0,717.0 452.0,718.3" fill="#4f86a3" stroke="#f4eef8" stroke-width="0.9" stroke-linejoin="round"/>
<polygon points="440.3,775.3 455.9,768.8 448.1,785.7 440.3,782.0" fill="#52b5b5" stroke="#f4eef8" stroke-width="0.9" stroke-linejoin="round"/>
<polygon points="450.7,780.5 461.1,776.6 465.0,784.4 453.3,793.5" fill="#9ecece" stroke="#f4eef8" stroke-width="0.9" stroke-linejoin="round"/>
<polygon points="464.8,697.8 479.6,692.2 490.6,694.0 490.6,710.8 465.3,708.4" fill="#52b5b5" stroke="#f4eef8" stroke-width="0.9" stroke-linejoin="round"/>
<polygon points="491.8,688.0 507.4,688.5 503.8,714.4 490.6,712.0" fill="#454d88" stroke="#f4eef8" stroke-width="0.9" stroke-linejoin="round"/>
<polygon points="453.2,709.6 465.3,709.6 464.1,718.0 452.0,718.0" fill="#4f86a3" stroke="#f4eef8" stroke-width="0.9" stroke-linejoin="round"/>
<polygon points="465.3,709.6 497.8,715.7 493.0,731.3 472.5,725.3" fill="#9599be" stroke="#f4eef8" stroke-width="0.9" stroke-linejoin="round"/>
<polygon points="442.4,738.5 449.6,720.5 467.7,719.3 471.3,725.3 468.9,748.2 458.0,745.7 442.4,748.2" fill="#4f86a3" stroke="#f4eef8" stroke-width="0.9" stroke-linejoin="round"/>
<polygon points="440.0,749.4 458.0,745.7 460.5,750.6 467.7,749.4 462.9,768.6 440.0,768.6" fill="#9ecece" stroke="#f4eef8" stroke-width="0.9" stroke-linejoin="round"/>
<polygon points="464.1,750.6 495.4,742.1 491.8,760.2 477.3,771.0 462.9,772.2" fill="#52b5b5" stroke="#f4eef8" stroke-width="0.9" stroke-linejoin="round"/>
<polygon points="477.3,771.0 490.6,761.4 489.4,775.8" fill="#9599be" stroke="#f4eef8" stroke-width="0.9" stroke-linejoin="round"/>
<polygon points="440.0,772.2 455.7,769.8 453.2,784.3 447.2,783.0" fill="#52b5b5" stroke="#f4eef8" stroke-width="0.9" stroke-linejoin="round"/>
<polygon points="453.2,778.3 460.5,784.3 459.3,791.5 448.4,791.5" fill="#9ecece" stroke="#f4eef8" stroke-width="0.9" stroke-linejoin="round"/>
<polygon points="509.0,681.0 526.0,681.0 523.0,700.0 521.9,718.0 532.7,721.7 536.3,736.1 541.1,748.2 529.1,755.4 502.6,715.7" fill="#9ecece" stroke="#f4eef8" stroke-width="0.9" stroke-linejoin="round"/>
<polygon points="526.0,681.0 548.0,681.0 557.4,696.0 570.4,707.0 572.4,709.6 580.9,720.5 576.0,721.7 578.5,730.1 576.0,738.5 582.0,744.5 589.3,759.0 588.1,765.0 578.5,765.0 572.4,768.6 560.4,766.2 548.4,757.8 541.1,748.2 536.3,736.1 532.7,721.7 521.9,718.0" fill="#cb9ec3" stroke="#f4eef8" stroke-width="0.9" stroke-linejoin="round"/>
<polygon points="583.3,721.7 595.3,719.3 597.7,727.7 584.5,726.5" fill="#4f86a3" stroke="#f4eef8" stroke-width="0.9" stroke-linejoin="round"/>
<polygon points="489.4,779.5 529.1,755.4 554.4,795.1" fill="#cb9ec3" stroke="#f4eef8" stroke-width="0.9" stroke-linejoin="round"/>
<polygon points="517.0,812.0 559.2,800.0 560.4,806.0 536.3,816.8 518.3,818.0" fill="#52b5b5" stroke="#f4eef8" stroke-width="0.9" stroke-linejoin="round"/>
<polygon points="559.2,800.0 612.2,786.7 613.0,792.0 590.5,802.3 584.5,804.7 564.0,812.0" fill="#9ecece" stroke="#f4eef8" stroke-width="0.9" stroke-linejoin="round"/>
<polygon points="564.0,812.0 584.5,803.5 591.7,808.4 597.7,830.0 571.2,830.0" fill="#4f86a3" stroke="#f4eef8" stroke-width="0.9" stroke-linejoin="round"/>
<polygon points="488.2,803.5 515.9,809.6 514.6,816.8 487.6,807.2" fill="#4f86a3" stroke="#f4eef8" stroke-width="0.9" stroke-linejoin="round"/>
<polygon points="450.8,802.3 488.2,807.2 515.9,816.8 512.2,820.4 488.2,819.2 467.7,814.4 452.0,806.0" fill="#9ecece" stroke="#f4eef8" stroke-width="0.9" stroke-linejoin="round"/>
<polygon points="488.2,820.4 514.6,818.0 532.7,819.2 529.1,830.0 488.2,830.0" fill="#9599be" stroke="#f4eef8" stroke-width="0.9" stroke-linejoin="round"/>
<polygon points="657.2,745.7 668.2,752.0 680.8,745.7 688.7,753.5 684.0,769.3 672.9,781.9 668.2,789.8 668.2,799.2 657.2,808.7 643.0,802.4 630.4,791.3 619.4,781.9 625.7,770.9" fill="#cb9ec3" stroke="#f4eef8" stroke-width="0.9" stroke-linejoin="round"/>
<polygon points="612.3,744.9 622.5,743.3 622.5,755.1 616.2,766.1 616.2,770.9 612.3,770.9" fill="#4f86a3" stroke="#f4eef8" stroke-width="0.9" stroke-linejoin="round"/>
<polygon points="583.1,720.5 598.9,718.9 602.0,726.8 584.7,726.8" fill="#4f86a3" stroke="#f4eef8" stroke-width="0.9" stroke-linejoin="round"/>
<polygon points="598.9,763.0 606.8,759.8 612.3,759.8 612.3,785.0 595.7,788.2 595.7,770.9" fill="#cb9ec3" stroke="#f4eef8" stroke-width="0.9" stroke-linejoin="round"/>
<polygon points="588.0,771.0 595.7,770.9 595.7,788.2 588.0,790.0" fill="#9ecece" stroke="#f4eef8" stroke-width="0.9" stroke-linejoin="round"/>
<polygon points="613.0,772.4 622.5,772.4 624.1,780.3 619.4,794.5 613.0,792.9" fill="#4f86a3" stroke="#f4eef8" stroke-width="0.9" stroke-linejoin="round"/>
<polygon points="580.0,794.5 611.5,786.6 608.3,794.5 589.4,807.1 580.0,803.0" fill="#9ecece" stroke="#f4eef8" stroke-width="0.9" stroke-linejoin="round"/>
<polygon points="608.3,794.5 619.4,794.5 617.8,802.4 611.5,805.5" fill="#9599be" stroke="#f4eef8" stroke-width="0.9" stroke-linejoin="round"/>
<polygon points="598.9,802.4 608.3,794.5 611.5,805.5 598.9,808.7" fill="#52b5b5" stroke="#f4eef8" stroke-width="0.9" stroke-linejoin="round"/>
<polygon points="625.7,791.3 635.1,791.3 643.0,800.8 624.1,802.4" fill="#52b5b5" stroke="#f4eef8" stroke-width="0.9" stroke-linejoin="round"/>
<polygon points="627.2,796.0 643.0,802.4 636.7,810.2 624.1,808.7" fill="#9599be" stroke="#f4eef8" stroke-width="0.9" stroke-linejoin="round"/>
<polygon points="589.4,807.1 614.6,807.1 619.4,810.2 598.9,821.3 592.6,813.4" fill="#9ecece" stroke="#f4eef8" stroke-width="0.9" stroke-linejoin="round"/>
<polygon points="580.0,803.9 589.4,807.1 597.3,822.8 580.0,829.1" fill="#4f86a3" stroke="#f4eef8" stroke-width="0.9" stroke-linejoin="round"/>
<polygon points="617.8,811.8 628.8,810.2 633.5,821.3 627.2,830.7 619.4,826.0" fill="#52b5b5" stroke="#f4eef8" stroke-width="0.9" stroke-linejoin="round"/>
<polygon points="628.8,810.2 646.1,807.1 652.4,824.4 649.3,832.3 633.5,829.1 633.5,821.3" fill="#4f86a3" stroke="#f4eef8" stroke-width="0.9" stroke-linejoin="round"/>
<polygon points="647.7,810.2 657.2,810.2 658.7,826.0 652.4,824.4" fill="#4f86a3" stroke="#f4eef8" stroke-width="0.9" stroke-linejoin="round"/>
<polygon points="610.0,813.0 617.8,813.0 617.8,826.0 610.0,826.0" fill="#cb9ec3" stroke="#f4eef8" stroke-width="0.9" stroke-linejoin="round"/>
<polygon points="614.6,823.0 625.0,823.0 627.0,837.0 616.0,837.0" fill="#9ecece" stroke="#f4eef8" stroke-width="0.9" stroke-linejoin="round"/>
<polygon points="619.4,835.0 627.0,835.0 627.0,842.0 619.4,842.0" fill="#52b5b5" stroke="#f4eef8" stroke-width="0.9" stroke-linejoin="round"/>
<polygon points="580.0,829.1 597.3,822.8 617.8,863.8 589.4,870.0 575.0,862.0" fill="#9599be" stroke="#f4eef8" stroke-width="0.9" stroke-linejoin="round"/>
<polygon points="598.9,821.3 611.5,816.5 630.4,859.0 617.8,863.8" fill="#4f86a3" stroke="#f4eef8" stroke-width="0.9" stroke-linejoin="round"/>
<polygon points="627.2,830.7 649.3,832.3 650.9,846.5 643.0,849.6 633.5,844.9" fill="#9599be" stroke="#f4eef8" stroke-width="0.9" stroke-linejoin="round"/>
<polygon points="633.5,845.0 643.0,849.6 641.0,856.0 635.0,856.0" fill="#4f86a3" stroke="#f4eef8" stroke-width="0.9" stroke-linejoin="round"/>
<polygon points="658.7,851.2 671.3,844.9 672.9,851.2 666.6,857.5" fill="#52b5b5" stroke="#f4eef8" stroke-width="0.9" stroke-linejoin="round"/>
<polygon points="643.0,853.0 657.0,853.0 657.0,870.0 645.0,870.0" fill="#cb9ec3" stroke="#f4eef8" stroke-width="0.9" stroke-linejoin="round"/>
<polygon points="657.0,858.0 662.3,858.5 688.7,881.4 706.3,893.7 711.5,907.8 702.8,909.5 685.2,899.0 657.0,897.0" fill="#ad5a9f" stroke="#f4eef8" stroke-width="0.9" stroke-linejoin="round"/>
<polygon points="376.9,780.0 384.0,805.3 369.6,801.7" fill="#52b5b5" stroke="#f4eef8" stroke-width="0.9" stroke-linejoin="round"/>
<polygon points="369.6,801.7 384.0,805.3 388.0,810.0 375.0,826.0 364.8,818.5" fill="#52b5b5" stroke="#f4eef8" stroke-width="0.9" stroke-linejoin="round"/>
<polygon points="387.0,814.0 395.0,826.0 387.0,835.0 375.0,826.0" fill="#9ecece" stroke="#f4eef8" stroke-width="0.9" stroke-linejoin="round"/>
<polygon points="388.0,808.0 407.0,799.3 413.0,815.0 426.0,826.0 411.0,840.0 404.0,824.5 396.0,826.0" fill="#cb9ec3" stroke="#f4eef8" stroke-width="0.9" stroke-linejoin="round"/>
<polygon points="388.0,835.0 404.0,824.5 411.0,840.0 403.0,847.4" fill="#4f86a3" stroke="#f4eef8" stroke-width="0.9" stroke-linejoin="round"/>
<polygon points="450.8,806.0 461.0,815.0 468.0,819.0 461.0,826.0 461.0,840.0 433.0,843.0 431.0,830.0 428.0,826.0" fill="#4f86a3" stroke="#f4eef8" stroke-width="0.9" stroke-linejoin="round"/>
<polygon points="461.0,826.0 481.0,817.3 490.0,829.0 456.0,840.0" fill="#cb9ec3" stroke="#f4eef8" stroke-width="0.9" stroke-linejoin="round"/>
<polygon points="461.0,840.0 484.0,834.0 499.7,864.3 485.2,861.9 468.4,864.3 464.0,850.0" fill="#9599be" stroke="#f4eef8" stroke-width="0.9" stroke-linejoin="round"/>
<polygon points="427.4,845.0 434.6,845.0 434.6,858.0 427.4,858.0" fill="#52b5b5" stroke="#f4eef8" stroke-width="0.9" stroke-linejoin="round"/>
<polygon points="417.8,858.0 437.0,860.0 432.0,870.0 422.0,866.0" fill="#4f86a3" stroke="#f4eef8" stroke-width="0.9" stroke-linejoin="round"/>
<polygon points="432.0,858.0 441.0,860.0 446.7,881.0" fill="#52b5b5" stroke="#f4eef8" stroke-width="0.9" stroke-linejoin="round"/>
<polygon points="482.9,834.0 528.0,822.0 548.0,838.0 558.5,852.0 530.0,858.0 510.0,864.0 499.7,864.3" fill="#cb9ec3" stroke="#f4eef8" stroke-width="0.9" stroke-linejoin="round"/>
<polygon points="526.8,839.0 567.3,839.0 567.3,858.5 530.0,858.0" fill="#9599be" stroke="#f4eef8" stroke-width="0.9" stroke-linejoin="round"/>
<polygon points="562.0,834.0 579.6,834.0 579.6,856.7 562.0,856.7" fill="#4f86a3" stroke="#f4eef8" stroke-width="0.9" stroke-linejoin="round"/>
<polygon points="530.0,858.0 560.0,852.0 575.0,848.0 592.0,869.0 595.4,884.9 579.6,890.2 574.3,874.3 551.5,876.0 544.4,874.3 530.4,884.9 521.6,874.3" fill="#cb9ec3" stroke="#f4eef8" stroke-width="0.9" stroke-linejoin="round"/>
<polygon points="507.5,858.0 530.0,858.0 544.4,874.3 530.4,884.9 521.6,874.3 509.3,865.5" fill="#9599be" stroke="#f4eef8" stroke-width="0.9" stroke-linejoin="round"/>
<polygon points="530.4,821.6 563.8,811.0 572.6,834.0 548.0,841.0" fill="#9ecece" stroke="#f4eef8" stroke-width="0.9" stroke-linejoin="round"/>
</g>
<polyline points="440.0,808.4 450.8,802.3 561.6,734.9 583.0,721.0" fill="none" stroke="#fff" stroke-width="0.9"/>
<polyline points="502.6,715.7 529.1,755.4 559.2,800.0 571.2,830.0 580.0,850.0 589.7,869.7" fill="none" stroke="#fff" stroke-width="0.9"/>
<polyline points="489.4,779.5 554.4,795.1" fill="none" stroke="#fff" stroke-width="0.9"/>
<polyline points="489.4,779.5 502.6,715.7" fill="none" stroke="#fff" stroke-width="0.9"/>
<polyline points="377.0,778.0 452.0,773.0" fill="none" stroke="#fff" stroke-width="0.9"/>
<polyline points="385.0,778.0 393.0,803.0" fill="none" stroke="#fff" stroke-width="0.9"/>
<polyline points="405.0,777.0 418.0,800.0" fill="none" stroke="#fff" stroke-width="0.9"/>
<polyline points="425.0,776.0 430.0,800.0" fill="none" stroke="#fff" stroke-width="0.9"/>
<polyline points="393.0,790.0 420.0,784.0" fill="none" stroke="#fff" stroke-width="0.9"/>
<polyline points="515.0,782.0 512.0,805.0" fill="none" stroke="#fff" stroke-width="0.9"/>
<polyline points="535.0,787.0 532.0,808.0" fill="none" stroke="#fff" stroke-width="0.9"/>
<polyline points="592.0,869.0 643.0,861.0" fill="none" stroke="#fff" stroke-width="0.9"/>
<polyline points="643.0,861.0 641.0,901.0" fill="none" stroke="#fff" stroke-width="0.9"/>
<polyline points="604.0,909.0 641.0,901.0 685.0,898.0" fill="none" stroke="#fff" stroke-width="0.9"/>
<polyline points="446.7,841.0 468.0,841.0" fill="none" stroke="#fff" stroke-width="0.9"/>
<polyline points="457.0,842.0 461.0,870.0" fill="none" stroke="#fff" stroke-width="0.9"/>
<circle cx="497.4" cy="503.7" r="4.5" fill="#4f86a3" stroke="#fff" stroke-width="0.8"/>
</svg>
<!--/MAP-->
<!--CANVAS-->
<div class="a" style="left:344px;top:247.5px;font-family:'Liberation Sans';font-weight:bold;color:#10233f;white-space:nowrap;letter-spacing:1.3px">
<div class="a" style="left:0;top:0"><span style="font-size:27px">P</span><span style="font-size:22px">OPULATION</span></div>
</div>
<div class="a" style="left:389px;top:281px;width:53px;height:64px"><svg width="53" height="64" viewBox="0 0 53 64"><path d="M4 2L49 62M49 2L4 62" stroke="#c8c8c8" stroke-width="8"/></svg></div>
<div class="a" style="left:344px;top:275.5px;font-weight:bold;color:#c462ac;white-space:nowrap;letter-spacing:1.5px"><span style="font-size:34.5px">G</span><span style="font-size:28px">ROWTH</span></div>
<div class="a" style="left:344px;top:313px;font-weight:bold;color:#52c2c6;white-space:nowrap;letter-spacing:1.5px;opacity:0.97"><span style="font-size:33px">D</span><span style="font-size:28px">ENSITY</span></div>
<div class="a" style="left:344px;top:349px;font-weight:bold;color:#10233f;white-space:nowrap;letter-spacing:0.6px"><span style="font-size:24px">IN </span><span style="font-size:27px">Q</span><span style="font-size:24px">UEZON </span><span style="font-size:27px">C</span><span style="font-size:24px">ITY</span></div>
<svg class="a" style="left:1133px;top:226px" width="206" height="206" viewBox="1133 226 206 206">
<defs><clipPath id="ic"><circle cx="1235.4" cy="329" r="101.6"/></clipPath></defs>
<g clip-path="url(#ic)">
<rect x="1133" y="226" width="206" height="206" fill="#f7f5ee"/>
<polygon points="1164.2,259.2 1175.6,270.6 1187,264.9 1200.2,282 1209.7,297.1 1205.9,304.7 1213.5,308.5 1209.7,320 1217.3,327.5 1219.2,339 1219.2,357.9 1205.9,357.9 1194.6,357.9 1185.1,369.3 1181.3,380.7 1164.2,392.1 1120,420 1120,250" fill="#d3e6ea"/>
<polygon points="1251.5,354.1 1262.9,346.5 1270.5,339 1281.9,348.4 1295.2,365.5 1308.5,386.4 1312.3,375 1319.9,365.5 1335,350.3 1350,340 1350,440 1251.5,440 1251.5,392.1 1251.5,369.3" fill="#d3e6ea"/>
<polygon points="1190.8,261.1 1206,255.4 1228.7,245.9 1253.4,245.9 1278.1,247.8 1281.9,263 1278.1,282 1274.3,301 1266.7,316.1 1268.6,331.3 1262.9,346.5 1255.3,354.1 1251.5,369.3 1251.5,392.1 1247.7,407.3 1232.5,411.1 1232.5,392.1 1217.3,373.1 1217.3,357.9 1219.2,339 1217.3,327.5 1209.7,320 1213.5,308.5 1205.9,304.7 1209.7,297.1 1200.2,282" fill="#e6e5e9"/>
<polygon points="1297.1,255.4 1312.3,266.8 1314.2,282 1306.6,287.7 1297.1,282" fill="#e8ecdc"/>
<path d="M1168 249L1180 246L1186 252L1172 256Z" fill="#d3e6ea"/>
<path d="M1234 313L1240 328L1228 345L1236 360M1240 328L1262 332M1220 330L1240 328M1232 360L1251 362M1236 360L1240 392M1219 357L1232 372M1205 290L1228 290M1210 300L1225 305M1238 392L1248 400M1255 316L1266 330" stroke="#f6f6f8" stroke-width="0.8" fill="none"/>
<path d="M1200 236L1214 262M1206 236L1218 260M1204 370L1198 430M1212 368L1208 430M1250 405L1260 430" stroke="#f3d9a4" stroke-width="0.7" fill="none"/>
<polygon points="1278.1,247.8 1272.4,253.5 1262.9,259.2 1251.5,261.1 1243.9,263 1236.3,268.7 1234.4,276.3 1236.3,280.1 1228.7,289.6 1224.9,299 1224.9,306.6 1234.4,313.3 1240.1,311.4 1247.7,314.2 1251.5,319 1257.2,316.1 1261,315.2 1255.3,308.5 1259.1,299 1268.6,287.7 1272.4,278.2 1274.3,270.6 1276.2,268.7 1274.3,263" fill="#0f2444"/>
</g></svg>
<div class="a" style="left:941px;top:467.5px;font-size:15.8px;font-weight:bold;color:#10233f;white-space:nowrap;letter-spacing:0px">Top 5 barangays with the most population (2020)</div>
<div class="a" style="left:934px;top:491px;width:79px;height:19px;background:#0c2340"></div>
<div class="a" style="left:937px;top:493.5px;font-size:12.5px;font-weight:bold;color:#fff">barangay</div>
<div class="a" style="left:934px;top:512px;width:79px;height:17px;background:#e6e6e6"></div>
<div class="a" style="left:937px;top:514px;font-size:10.6px;color:#1e1e1e;white-space:nowrap">Commonwealth</div>
<div class="a" style="left:934px;top:532px;width:79px;height:17px;background:#e6e6e6"></div>
<div class="a" style="left:937px;top:534px;font-size:10.6px;color:#1e1e1e;white-space:nowrap">Batasan Hills</div>
<div class="a" style="left:934px;top:552px;width:79px;height:17px;background:#e6e6e6"></div>
<div class="a" style="left:937px;top:554px;font-size:10.6px;color:#1e1e1e;white-space:nowrap">Payatas</div>
<div class="a" style="left:934px;top:572px;width:79px;height:17px;background:#e6e6e6"></div>
<div class="a" style="left:937px;top:574px;font-size:10.6px;color:#1e1e1e;white-space:nowrap">Holy Spirit</div>
<div class="a" style="left:934px;top:592px;width:79px;height:17px;background:#e6e6e6"></div>
<div class="a" style="left:937px;top:594px;font-size:10.6px;color:#1e1e1e;white-space:nowrap">Pasong Tamo</div>
<div class="a" style="left:1016px;top:491px;width:57px;height:19px;background:#0c2340"></div>
<div class="a" style="left:1016px;top:493.5px;width:57px;text-align:center;font-size:12.5px;font-weight:bold;color:#fff">pop2020</div>
<div class="a" style="left:1016px;top:512px;width:57px;height:17px;background:#e6e6e6"></div>
<div class="a" style="left:1016px;top:515.5px;width:54px;text-align:right;font-size:10.4px;color:#1e1e1e;letter-spacing:0.15px">213229</div>
<div class="a" style="left:1016px;top:532px;width:57px;height:17px;background:#e6e6e6"></div>
<div class="a" style="left:1016px;top:535.5px;width:54px;text-align:right;font-size:10.4px;color:#1e1e1e;letter-spacing:0.15px">166572</div>
<div class="a" style="left:1016px;top:552px;width:57px;height:17px;background:#e6e6e6"></div>
<div class="a" style="left:1016px;top:555.5px;width:54px;text-align:right;font-size:10.4px;color:#1e1e1e;letter-spacing:0.15px">139740</div>
<div class="a" style="left:1016px;top:572px;width:57px;height:17px;background:#e6e6e6"></div>
<div class="a" style="left:1016px;top:575.5px;width:54px;text-align:right;font-size:10.4px;color:#1e1e1e;letter-spacing:0.15px">111901</div>
<div class="a" style="left:1016px;top:592px;width:57px;height:17px;background:#e6e6e6"></div>
<div class="a" style="left:1016px;top:595.5px;width:54px;text-align:right;font-size:10.4px;color:#1e1e1e;letter-spacing:0.15px">110738</div>
<div class="a" style="left:1076px;top:491px;width:55px;height:19px;background:#0c2340"></div>
<div class="a" style="left:1076px;top:493.5px;width:55px;text-align:center;font-size:12.5px;font-weight:bold;color:#fff">pop2015</div>
<div class="a" style="left:1076px;top:512px;width:55px;height:17px;background:#e6e6e6"></div>
<div class="a" style="left:1076px;top:515.5px;width:52px;text-align:right;font-size:10.4px;color:#1e1e1e;letter-spacing:0.15px">198285</div>
<div class="a" style="left:1076px;top:532px;width:55px;height:17px;background:#e6e6e6"></div>
<div class="a" style="left:1076px;top:535.5px;width:52px;text-align:right;font-size:10.4px;color:#1e1e1e;letter-spacing:0.15px">161409</div>
<div class="a" style="left:1076px;top:552px;width:55px;height:17px;background:#e6e6e6"></div>
<div class="a" style="left:1076px;top:555.5px;width:52px;text-align:right;font-size:10.4px;color:#1e1e1e;letter-spacing:0.15px">130333</div>
<div class="a" style="left:1076px;top:572px;width:55px;height:17px;background:#e6e6e6"></div>
<div class="a" style="left:1076px;top:575.5px;width:52px;text-align:right;font-size:10.4px;color:#1e1e1e;letter-spacing:0.15px">110447</div>
<div class="a" style="left:1076px;top:592px;width:55px;height:17px;background:#e6e6e6"></div>
<div class="a" style="left:1076px;top:595.5px;width:52px;text-align:right;font-size:10.4px;color:#1e1e1e;letter-spacing:0.15px">103100</div>
<div class="a" style="left:1134px;top:491px;width:55px;height:19px;background:#0c2340"></div>
<div class="a" style="left:1134px;top:493.5px;width:55px;text-align:center;font-size:12.5px;font-weight:bold;color:#fff">pop2010</div>
<div class="a" style="left:1134px;top:512px;width:55px;height:17px;background:#e6e6e6"></div>
<div class="a" style="left:1134px;top:515.5px;width:52px;text-align:right;font-size:10.4px;color:#1e1e1e;letter-spacing:0.15px">186543</div>
<div class="a" style="left:1134px;top:532px;width:55px;height:17px;background:#e6e6e6"></div>
<div class="a" style="left:1134px;top:535.5px;width:52px;text-align:right;font-size:10.4px;color:#1e1e1e;letter-spacing:0.15px">150764</div>
<div class="a" style="left:1134px;top:552px;width:55px;height:17px;background:#e6e6e6"></div>
<div class="a" style="left:1134px;top:555.5px;width:52px;text-align:right;font-size:10.4px;color:#1e1e1e;letter-spacing:0.15px">119053</div>
<div class="a" style="left:1134px;top:572px;width:55px;height:17px;background:#e6e6e6"></div>
<div class="a" style="left:1134px;top:575.5px;width:52px;text-align:right;font-size:10.4px;color:#1e1e1e;letter-spacing:0.15px">101385</div>
<div class="a" style="left:1134px;top:592px;width:55px;height:17px;background:#e6e6e6"></div>
<div class="a" style="left:1134px;top:595.5px;width:52px;text-align:right;font-size:10.4px;color:#1e1e1e;letter-spacing:0.15px">85954</div>
<div class="a" style="left:1192px;top:491px;width:57px;height:19px;background:#0c2340"></div>
<div class="a" style="left:1192px;top:493.5px;width:57px;text-align:center;font-size:12.5px;font-weight:bold;color:#fff">pop2007</div>
<div class="a" style="left:1192px;top:512px;width:57px;height:17px;background:#e6e6e6"></div>
<div class="a" style="left:1192px;top:515.5px;width:54px;text-align:right;font-size:10.4px;color:#1e1e1e;letter-spacing:0.15px">172834</div>
<div class="a" style="left:1192px;top:532px;width:57px;height:17px;background:#e6e6e6"></div>
<div class="a" style="left:1192px;top:535.5px;width:54px;text-align:right;font-size:10.4px;color:#1e1e1e;letter-spacing:0.15px">148624</div>
<div class="a" style="left:1192px;top:552px;width:57px;height:17px;background:#e6e6e6"></div>
<div class="a" style="left:1192px;top:555.5px;width:54px;text-align:right;font-size:10.4px;color:#1e1e1e;letter-spacing:0.15px">117001</div>
<div class="a" style="left:1192px;top:572px;width:57px;height:17px;background:#e6e6e6"></div>
<div class="a" style="left:1192px;top:575.5px;width:54px;text-align:right;font-size:10.4px;color:#1e1e1e;letter-spacing:0.15px">106038</div>
<div class="a" style="left:1192px;top:592px;width:57px;height:17px;background:#e6e6e6"></div>
<div class="a" style="left:1192px;top:595.5px;width:54px;text-align:right;font-size:10.4px;color:#1e1e1e;letter-spacing:0.15px">82340</div>
<div class="a" style="left:1252px;top:491px;width:58px;height:19px;background:#0c2340"></div>
<div class="a" style="left:1252px;top:493.5px;width:58px;text-align:center;font-size:12.5px;font-weight:bold;color:#fff">pop2000</div>
<div class="a" style="left:1252px;top:512px;width:58px;height:17px;background:#e6e6e6"></div>
<div class="a" style="left:1252px;top:515.5px;width:55px;text-align:right;font-size:10.4px;color:#1e1e1e;letter-spacing:0.15px">120569</div>
<div class="a" style="left:1252px;top:532px;width:58px;height:17px;background:#e6e6e6"></div>
<div class="a" style="left:1252px;top:535.5px;width:55px;text-align:right;font-size:10.4px;color:#1e1e1e;letter-spacing:0.15px">109723</div>
<div class="a" style="left:1252px;top:552px;width:58px;height:17px;background:#e6e6e6"></div>
<div class="a" style="left:1252px;top:555.5px;width:55px;text-align:right;font-size:10.4px;color:#1e1e1e;letter-spacing:0.15px">112690</div>
<div class="a" style="left:1252px;top:572px;width:58px;height:17px;background:#e6e6e6"></div>
<div class="a" style="left:1252px;top:575.5px;width:55px;text-align:right;font-size:10.4px;color:#1e1e1e;letter-spacing:0.15px">89456</div>
<div class="a" style="left:1252px;top:592px;width:58px;height:17px;background:#e6e6e6"></div>
<div class="a" style="left:1252px;top:595.5px;width:55px;text-align:right;font-size:10.4px;color:#1e1e1e;letter-spacing:0.15px">64656</div>
<div class="a" style="left:931px;top:489px;width:382px;height:144px;border:1.5px solid #5a9ad2"></div>
<div class="a" style="left:931px;top:489px;width:10px;height:10px;background:#fff;border:1.5px solid #5a9ad2;border-radius:1px"></div>
<div class="a" style="left:931px;top:556px;width:10px;height:10px;background:#fff;border:1.5px solid #5a9ad2;border-radius:1px"></div>
<div class="a" style="left:931px;top:622px;width:10px;height:10px;background:#fff;border:1.5px solid #5a9ad2;border-radius:1px"></div>
<div class="a" style="left:1117px;top:489px;width:10px;height:10px;background:#fff;border:1.5px solid #5a9ad2;border-radius:1px"></div>
<div class="a" style="left:1117px;top:622px;width:10px;height:10px;background:#fff;border:1.5px solid #5a9ad2;border-radius:1px"></div>
<div class="a" style="left:1302px;top:489px;width:10px;height:10px;background:#fff;border:1.5px solid #5a9ad2;border-radius:1px"></div>
<div class="a" style="left:1302px;top:556px;width:10px;height:10px;background:#fff;border:1.5px solid #5a9ad2;border-radius:1px"></div>
<div class="a" style="left:1302px;top:622px;width:10px;height:10px;background:#fff;border:1.5px solid #5a9ad2;border-radius:1px"></div>
<div class="a" style="left:802px;top:768px;width:40px;height:40px;background:#ad5a9f"></div>
<div class="a" style="left:842px;top:768px;width:40px;height:40px;background:#7f5a9a"></div>
<div class="a" style="left:882px;top:768px;width:40px;height:40px;background:#454d88"></div>
<div class="a" style="left:802px;top:808px;width:40px;height:40px;background:#cb9ec3"></div>
<div class="a" style="left:842px;top:808px;width:40px;height:40px;background:#9599be"></div>
<div class="a" style="left:882px;top:808px;width:40px;height:40px;background:#4f86a3"></div>
<div class="a" style="left:802px;top:848px;width:40px;height:40px;background:#d4d4d4"></div>
<div class="a" style="left:842px;top:848px;width:40px;height:40px;background:#9ecece"></div>
<div class="a" style="left:882px;top:848px;width:40px;height:40px;background:#52b5b5"></div>
<div class="a" style="left:801px;top:891px;font-size:12.5px;font-weight:bold;color:#111">Low</div>
<div class="a" style="left:845px;top:891px;font-size:12.5px;font-weight:bold;color:#111">Mod</div>
<div class="a" style="left:887px;top:891px;font-size:12.5px;font-weight:bold;color:#111">High</div>
<div class="a" style="left:801px;top:908px;font-size:10.5px;color:#666;line-height:12px">people per 100sqm<br>(2022)</div>
<div class="a" style="left:748px;top:773px;width:80px;height:18px;text-align:center;font-size:12.5px;font-weight:bold;color:#111;transform:rotate(-90deg)">High</div>
<div class="a" style="left:748px;top:814px;width:80px;height:18px;text-align:center;font-size:12.5px;font-weight:bold;color:#111;transform:rotate(-90deg)">Mod</div>
<div class="a" style="left:748px;top:863px;width:80px;height:18px;text-align:center;font-size:12.5px;font-weight:bold;color:#111;transform:rotate(-90deg)">Low</div>
<div class="a" style="left:705.5px;top:813.5px;width:116px;height:26px;font-size:10.5px;color:#666;line-height:12px;text-align:left;transform:rotate(-90deg);white-space:nowrap">population growth rate<br>(2000-2020)</div>
<!--/CANVAS-->
<div id="vscroll" class="a">
 <div class="a" style="left:2px;top:9px;width:0;height:0;border-left:5px solid transparent;border-right:5px solid transparent;border-bottom:5px solid #555"></div>
 <div class="a" style="left:0;top:14px;width:13px;height:760px;background:linear-gradient(90deg,#fff,#f6f6f6);border-top:1px solid #ddd;border-bottom:1px solid #ccc"></div>
 <div class="a" style="left:0;top:774px;width:13px;height:114px;background:#e6e6e6"></div>
 <div class="a" style="left:2px;top:893px;width:0;height:0;border-left:5px solid transparent;border-right:5px solid transparent;border-top:5px solid #555"></div>
</div>

<div id="rpanel" class="a" style="left:1497px;top:142px;width:423px;height:901px;background:#efefef">
 <!-- tab line -->
 <div class="a" style="left:5px;top:34px;width:418px;height:1px;background:#c8c8c8"></div>
 <div class="tab on a" style="left:5px;top:1px;width:69px;height:34px;padding-top:7px">Items</div>
 <div class="tab a" style="left:74px;top:3px;width:121px;height:31px;padding-top:6px">Undo History</div>
 <div class="panel-t a" style="left:9px;top:39px">Items</div>
 <svg class="a" style="left:396px;top:43px" width="12" height="12" viewBox="0 0 12 12"><rect x="0.5" y="0.5" width="11" height="11" rx="2" fill="none" stroke="#555"/><rect x="4" y="2.5" width="5" height="5" fill="none" stroke="#555" stroke-width="0.9"/><rect x="2.5" y="4.5" width="5" height="5" fill="#efefef" stroke="#555" stroke-width="0.9"/></svg>
 <svg class="a" style="left:410px;top:43px" width="12" height="12" viewBox="0 0 12 12"><rect x="0.5" y="0.5" width="11" height="11" rx="2" fill="none" stroke="#555"/><path d="M3 3L9 9M9 3L3 9" stroke="#333" stroke-width="1.6"/></svg>
 <!-- tree -->
 <div class="a" style="left:5px;top:61px;width:418px;height:157px;background:#fff;border:1px solid #c4c4c4"></div>
 <div class="a" style="left:6px;top:62px;width:402px;height:26px;background:linear-gradient(#fdfdfd,#f0f0f0);border-bottom:1px solid #d8d8d8"></div>
 <div class="a" style="left:37px;top:62px;width:1px;height:26px;background:#d8d8d8"></div>
 <div class="a" style="left:69px;top:62px;width:1px;height:26px;background:#d8d8d8"></div>
 <div class="a" style="left:72px;top:65px;font-size:16.5px">Item</div>
 <svg class="a" style="left:8px;top:67px" width="18" height="16" viewBox="0 0 18 16"><path d="M1 8c3-5 13-5 16 0c-3 5-13 5-16 0z" fill="#eee" stroke="#888" stroke-width="1"/><circle cx="9" cy="8" r="3.2" fill="#888"/><circle cx="9" cy="8" r="1.3" fill="#222"/></svg>
 <svg class="a" style="left:41px;top:64px" width="14" height="18" viewBox="0 0 14 18"><path d="M3.5 8V5a3.5 3.5 0 0 1 7 0v3" fill="none" stroke="#777" stroke-width="1.6"/><rect x="1" y="8" width="12" height="9" rx="1.5" fill="#6a6a6a"/></svg>
 <div class="a" style="left:6px;top:88px;width:402px;height:26px;background:#308cc6"></div>
 <div class="a" style="left:408px;top:62px;width:14px;height:155px;background:#f4f4f4;border-left:1px solid #e0e0e0"></div>
 <div class="a" style="left:409px;top:117px;width:13px;height:95px;background:#e2e2e2"></div>
<div class="a" style="left:9px;top:94px;width:14px;height:14px;background:#fff;border:1px solid #bbb;font-size:13px;line-height:12px;text-align:center;font-weight:bold;color:#000">&#x2713;</div><div class="a" style="left:41px;top:94px;width:14px;height:14px;background:#fff;border:1px solid #fff"></div><div class="a" style="left:73px;top:94px;width:14px;height:14px;background:#ddd;border:1px solid #888"><div class="a" style="left:1px;top:1px;width:10px;height:3px;background:#555"></div></div><div class="a" style="left:95px;top:90px;font-size:17px;color:#fff;font-weight:bold">&lt;Attribute table frame&gt;</div><div class="a" style="left:9px;top:119px;width:14px;height:14px;background:#fff;border:1px solid #bbb;font-size:13px;line-height:12px;text-align:center;font-weight:bold;color:#000">&#x2713;</div><div class="a" style="left:41px;top:119px;width:14px;height:14px;background:#fff;border:1px solid #ccc"></div><div class="a" style="left:73px;top:119px;width:14px;height:14px;background:#f4f4f4;border:1px solid #999;font-family:'Liberation Serif';font-size:12px;line-height:12px;text-align:center;color:#444">T</div><div class="a" style="left:95px;top:115px;font-size:17px;color:#1a1a1a">Top 5 barangays with the...</div><div class="a" style="left:9px;top:144px;width:14px;height:14px;background:#fff;border:1px solid #bbb;font-size:13px;line-height:12px;text-align:center;font-weight:bold;color:#000">&#x2713;</div><div class="a" style="left:41px;top:144px;width:14px;height:14px;background:#fff;border:1px solid #ccc"></div><div class="a" style="left:73px;top:144px;width:14px;height:14px;background:linear-gradient(90deg,#aaa,#eee);border:1px solid #999"></div><div class="a" style="left:95px;top:140px;font-size:17px;color:#1a1a1a">Inset</div><div class="a" style="left:9px;top:169px;width:14px;height:14px;background:#fff;border:1px solid #bbb;font-size:13px;line-height:12px;text-align:center;font-weight:bold;color:#000">&#x2713;</div><div class="a" style="left:41px;top:169px;width:14px;height:14px;background:#fff;border:1px solid #ccc"></div><div class="a" style="left:73px;top:169px;width:14px;height:14px;background:#eee;border:1px solid #aaa;border-radius:50%"></div><div class="a" style="left:95px;top:165px;font-size:17px;color:#1a1a1a">&lt;Ellipse&gt;</div><div class="a" style="left:9px;top:194px;width:14px;height:14px;background:#fff;border:1px solid #bbb;font-size:13px;line-height:12px;text-align:center;font-weight:bold;color:#000">&#x2713;</div><div class="a" style="left:41px;top:194px;width:14px;height:14px;background:#fff;border:1px solid #ccc"></div><div class="a" style="left:73px;top:194px;width:14px;height:14px;background:linear-gradient(90deg,#aaa,#eee);border:1px solid #999"></div><div class="a" style="left:95px;top:190px;font-size:17px;color:#1a1a1a">Main</div>
 <!-- splitter dots -->
 <div class="a" style="left:212px;top:219px;width:14px;height:2px;border-top:1px dotted #aaa"></div>
 <div class="a" style="left:5px;top:257px;width:418px;height:1px;background:#c8c8c8"></div>
 <div class="tab on a" style="left:5px;top:224px;width:143px;height:34px;padding-top:7px">Item Properties</div>
 <div class="tab a" style="left:148px;top:226px;width:62px;height:31px;padding-top:6px">Atlas</div>
 <div class="tab a" style="left:210px;top:226px;width:75px;height:31px;padding-top:6px">Guides</div>
 <div class="panel-t a" style="left:9px;top:262px">Item Properties</div>
 <svg class="a" style="left:396px;top:266px" width="12" height="12" viewBox="0 0 12 12"><rect x="0.5" y="0.5" width="11" height="11" rx="2" fill="none" stroke="#555"/><rect x="4" y="2.5" width="5" height="5" fill="none" stroke="#555" stroke-width="0.9"/><rect x="2.5" y="4.5" width="5" height="5" fill="#efefef" stroke="#555" stroke-width="0.9"/></svg>
 <svg class="a" style="left:410px;top:266px" width="12" height="12" viewBox="0 0 12 12"><rect x="0.5" y="0.5" width="11" height="11" rx="2" fill="none" stroke="#555"/><path d="M3 3L9 9M9 3L3 9" stroke="#333" stroke-width="1.6"/></svg>
 <div class="a" style="left:5px;top:290px;width:418px;height:28px;background:#b9b9b9"></div>
 <div class="gh a" style="left:9px;top:294px">Attribute table</div>
 <div class="a" style="left:5px;top:318px;width:1px;height:583px;background:#c8c8c8"></div>
 <div class="a" style="left:408px;top:318px;width:14px;height:583px;background:#f2f2f2;border-left:1px solid #d4d4d4"></div>
 <div class="a" style="left:409px;top:334px;width:13px;height:178px;background:linear-gradient(90deg,#fdfdfd,#f4f4f4);border-bottom:1px solid #d0d0d0"></div>
 <div class="a" style="left:409px;top:512px;width:13px;height:376px;background:#e6e6e6"></div>
 <div class="a" style="left:411px;top:323px;width:0;height:0;border-left:5px solid transparent;border-right:5px solid transparent;border-bottom:5px solid #555"></div>
 <div class="a" style="left:411px;top:891px;width:0;height:0;border-left:5px solid transparent;border-right:5px solid transparent;border-top:5px solid #555"></div>
 <div class="a" style="left:411px;top:66px;width:0;height:0;border-left:5px solid transparent;border-right:5px solid transparent;border-bottom:5px solid #555"></div>
 <div class="a" style="left:411px;top:208px;width:0;height:0;border-left:5px solid transparent;border-right:5px solid transparent;border-top:5px solid #555"></div>
 <div class="tri a" style="left:18px;top:337px"></div>
 <div class="gh a" style="left:38px;top:329px">Main Properties</div>
 <div class="grp a" style="left:16px;top:354px;width:383px;height:165px"></div>
 <div class="lbl a" style="left:27px;top:369px">Source</div>
 <div class="combo a" style="left:85px;top:365px;width:302px;height:31px"></div>
 <div class="lbl a" style="left:90px;top:369px">Layer Features</div>
 <div class="a" style="left:369px;top:378px;width:0;height:0;border-left:5px solid transparent;border-right:5px solid transparent;border-top:5px solid #444"></div>
 <div class="lbl a" style="left:27px;top:406px">Layer</div>
 <div class="combo a" style="left:85px;top:402px;width:266px;height:31px"></div>
 <div class="a" style="left:91px;top:410px;width:15px;height:12px;border:1.5px solid #aaa;border-radius:40% 40% 30% 30%;background:#e8e8e8"></div>
 <div class="lbl a" style="left:110px;top:406px">brgy_popden</div>
 <div class="a" style="left:333px;top:415px;width:0;height:0;border-left:5px solid transparent;border-right:5px solid transparent;border-top:5px solid #444"></div>
 <div class="a" style="left:362px;top:410px;width:18px;height:15px;border:1.5px solid #666;border-left:none;border-radius:0 2px 2px 0"></div>
 <div class="a" style="left:356px;top:410px;width:0;height:0;border-top:7.5px solid transparent;border-bottom:7.5px solid transparent;border-right:7px solid #666"></div>
 <div class="a" style="left:366px;top:414px;width:10px;height:1.5px;background:#666"></div>
 <div class="a" style="left:366px;top:418px;width:10px;height:1.5px;background:#666"></div>
 <div class="btn a" style="left:27px;top:439px;width:360px;height:31px;padding-top:4px">Refresh Table Data</div>
 <div class="btn a" style="left:27px;top:476px;width:360px;height:31px;padding-top:4px">Attributes...</div>
 <div class="tri a" style="left:18px;top:533px"></div>
 <div class="gh a" style="left:38px;top:526px">Feature Filtering</div>
 <div class="grp a" style="left:16px;top:552px;width:383px;height:234px"></div>
 <div class="lbl a" style="left:27px;top:568px">Maximum rows</div>
 <div class="inp a" style="left:146px;top:564px;width:241px;height:30px"></div>
 <div class="lbl a" style="left:152px;top:568px">5</div>
 <div class="a" style="left:371px;top:565px;width:1px;height:28px;background:#ddd"></div>
 <div class="a" style="left:374px;top:570px;width:0;height:0;border-left:5px solid transparent;border-right:5px solid transparent;border-bottom:5px solid #555"></div><div class="a" style="left:374px;top:584px;width:0;height:0;border-left:5px solid transparent;border-right:5px solid transparent;border-top:5px solid #555"></div>
 <div class="chk a" style="left:27px;top:609px;font-size:13px;line-height:12px;text-align:center;font-weight:bold;color:#000">&#x2713;</div>
 <div class="lbl a" style="left:46px;top:604px">Remove duplicate rows from table</div>
 <div class="chk a" style="left:27px;top:643px"></div>
 <div class="lbl a" style="left:46px;top:639px">Show only features visible within a map</div>
 <div class="lbl a" style="left:27px;top:675px;color:#b0b0b0">Linked map</div>
 <div class="combo a" style="left:146px;top:671px;width:241px;height:30px;border-color:#d0d0d0"></div>
 <div class="a" style="left:369px;top:684px;width:0;height:0;border-left:5px solid transparent;border-right:5px solid transparent;border-top:5px solid #c8c8c8"></div>
 <div class="chk a" style="left:27px;top:716px;border-color:#d4d4d4;background:#efefef"></div>
 <div class="lbl a" style="left:46px;top:711px;color:#b0b0b0">Show only features intersecting atlas feature</div>
 <div class="chk a" style="left:27px;top:751px"></div>
 <div class="lbl a" style="left:46px;top:747px">Filter with</div>
 <div class="a" style="left:146px;top:743px;width:211px;height:31px;border:1px solid #c0c0c0;border-radius:3px;background:#ececec"></div>
 <div class="a" style="left:364px;top:747px;width:23px;height:23px;border:1px solid #d8d8d8;border-radius:3px;background:#f0f0f0;color:#bbb;font-size:14px;text-align:center;line-height:20px">&#x03b5;</div>
 <div class="tri a" style="left:18px;top:800px"></div>
 <div class="gh a" style="left:38px;top:793px">Appearance</div>
 <div class="grp a" style="left:16px;top:819px;width:383px;height:100px"></div>
 <div class="chk a" style="left:27px;top:838px"></div>
 <div class="lbl a" style="left:46px;top:833px">Show empty rows</div>
 <div class="lbl a" style="left:27px;top:869px">Cell margins</div>
 <div class="inp a" style="left:177px;top:866px;width:210px;height:30px"></div>
 <div class="lbl a" style="left:182px;top:869px">1.00 mm</div>
 <div class="a" style="left:371px;top:867px;width:1px;height:28px;background:#ddd"></div>
 <div class="a" style="left:374px;top:872px;width:0;height:0;border-left:5px solid transparent;border-right:5px solid transparent;border-bottom:5px solid #555"></div><div class="a" style="left:374px;top:886px;width:0;height:0;border-left:5px solid transparent;border-right:5px solid transparent;border-top:5px solid #555"></div>

</div>
<div id="status" class="a">
 <div class="st a" style="left:1321px;top:9px">x: 298.288 mm&nbsp; y: 110.487 mm&nbsp; page: 1</div>
 <div class="a" style="left:1662px;top:5px;width:151px;height:30px;background:#fff;border:1px solid #bdbdbd;border-radius:3px"></div>
 <div class="a" style="left:1792px;top:6px;width:1px;height:28px;background:#d8d8d8"></div>
 <div class="st a" style="left:1666px;top:9px">104.4%</div>
 <div class="a" style="left:1797px;top:18px;width:0;height:0;border-left:5px solid transparent;border-right:5px solid transparent;border-top:5px solid #555"></div>
 <div class="a" style="left:1820px;top:18px;width:97px;height:5px;background:#e0e0e0;border:1px solid #c4c4c4;border-radius:3px"></div>
 <div class="a" style="left:1820px;top:18px;width:14px;height:5px;background:#308cc6;border-radius:3px"></div>
 <div class="a" style="left:1826px;top:12px;width:16px;height:17px;background:linear-gradient(#fff,#e8e8e8);border:1px solid #aaa;border-radius:4px"></div>
</div>
</body></html>
